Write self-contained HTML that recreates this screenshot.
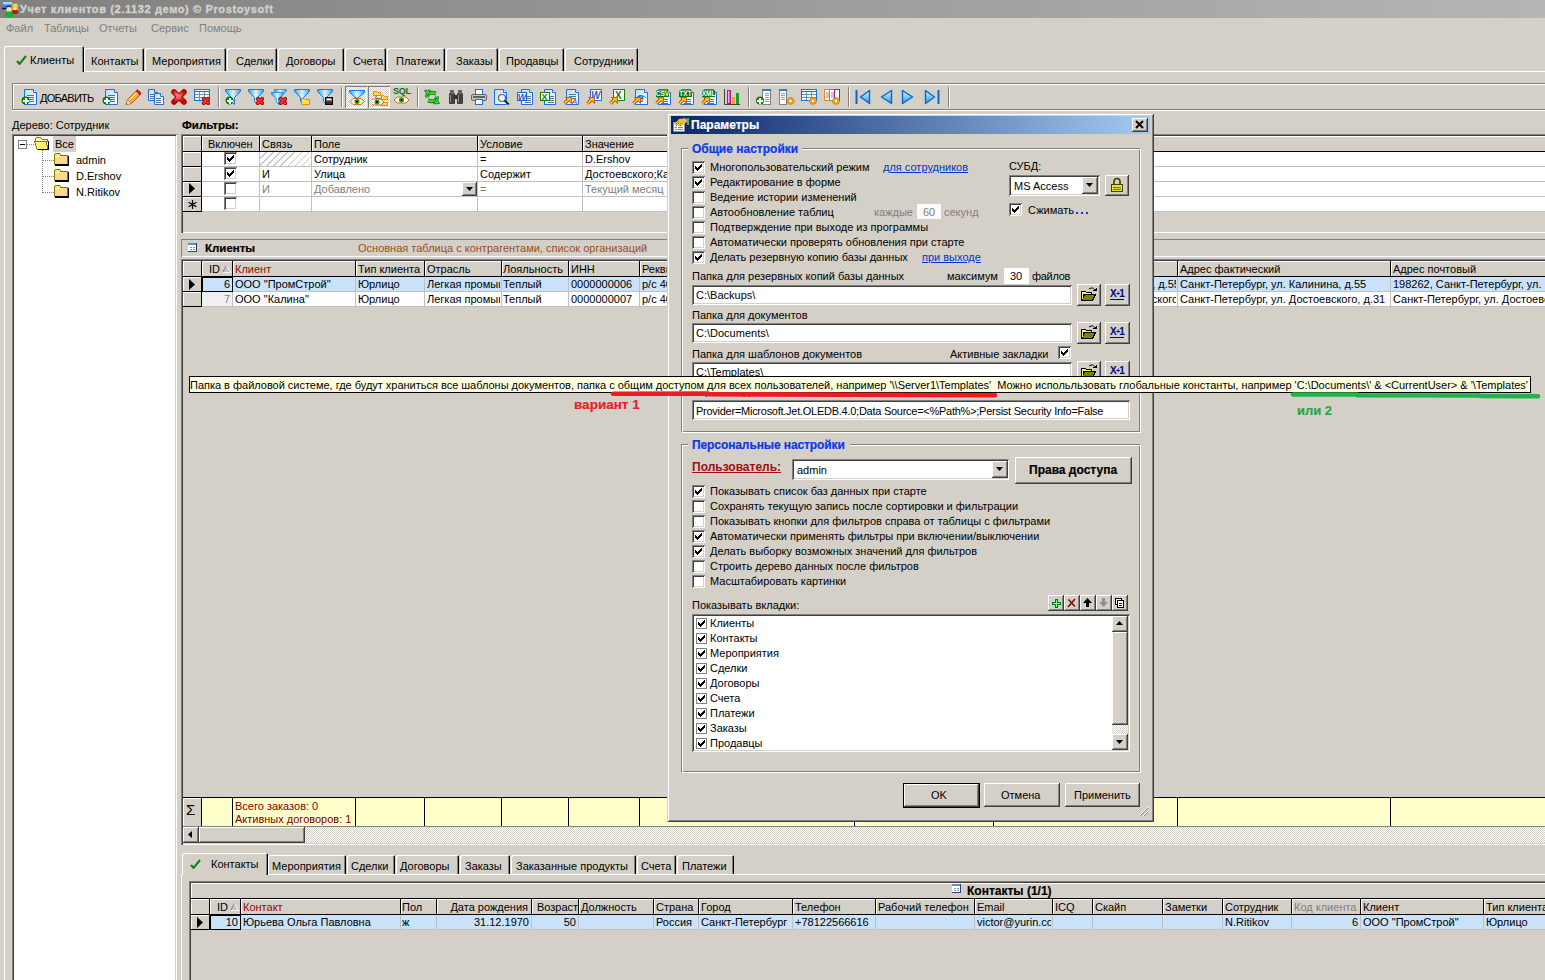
<!DOCTYPE html><html><head><meta charset="utf-8"><style>
html,body{margin:0;padding:0;width:1545px;height:980px;overflow:hidden;background:#d4d0c8;position:relative}
.a{position:absolute}
.t{position:absolute;font:11px/13px "Liberation Sans",sans-serif;white-space:pre}
svg{shape-rendering:crispEdges}
.sm{shape-rendering:auto}
</style></head><body>
<div class="a" style="left:0px;top:0px;width:1545px;height:18px;background:linear-gradient(90deg,#808080,#b5b5b5);"></div>
<div class="t" style="left:20px;top:3px;color:#d4d0c8;font-weight:bold;-webkit-text-stroke:0.2px #d4d0c8;letter-spacing:0.62px;-webkit-text-stroke:0.35px #d4d0c8">Учет клиентов (2.1132 демо) © Prostoysoft</div>
<svg class="a sm" style="left:0;top:0" width="20" height="18" viewBox="0 0 20 18"><rect x="2.5" y="1.5" width="9.5" height="7" fill="#3a7ee8"/><rect x="3" y="2" width="9" height="2.5" fill="#a8d0f8"/><path d="M2 8.5h5" stroke="#101010" stroke-width="1.4"/><rect x="12" y="3.5" width="6" height="7" rx="1" fill="#f0b020"/><rect x="13.5" y="4" width="3.5" height="3" fill="#e8e040"/><rect x="12" y="10" width="6" height="4" rx="1.5" fill="#d00c0c"/><circle cx="15" cy="8.8" r="1.4" fill="#fff"/><path d="M6 7c1-2 4-2 5 0" fill="#303030"/><circle cx="9" cy="9.5" r="2.6" fill="#f8d8c0"/><path d="M5 17v-3c0-2 1.5-2.5 4-2.5s4 0.5 4 2.5v3z" fill="#18b028"/></svg>
<div class="t" style="left:6px;top:22px;color:#808080;">Файл</div>
<div class="t" style="left:44px;top:22px;color:#808080;">Таблицы</div>
<div class="t" style="left:99px;top:22px;color:#808080;">Отчеты</div>
<div class="t" style="left:151px;top:22px;color:#808080;">Сервис</div>
<div class="t" style="left:199px;top:22px;color:#808080;">Помощь</div>
<div class="a" style="left:83px;top:71px;width:1462px;height:1px;background:#fff;"></div>
<div class="a" style="left:4px;top:71px;width:1px;height:909px;background:#fff;"></div>
<div class="a" style="left:84px;top:48px;width:60px;height:23px;background:#d4d0c8;box-shadow: inset 1px 1px 0 #fff, inset -1px 0 0 #000, inset -2px 0 0 #808080;border-radius:2px 2px 0 0"></div>
<div class="t" style="left:91px;top:55px;color:#000;">Контакты</div>
<div class="a" style="left:145px;top:48px;width:81px;height:23px;background:#d4d0c8;box-shadow: inset 1px 1px 0 #fff, inset -1px 0 0 #000, inset -2px 0 0 #808080;border-radius:2px 2px 0 0"></div>
<div class="t" style="left:152px;top:55px;color:#000;">Мероприятия</div>
<div class="a" style="left:227px;top:48px;width:50px;height:23px;background:#d4d0c8;box-shadow: inset 1px 1px 0 #fff, inset -1px 0 0 #000, inset -2px 0 0 #808080;border-radius:2px 2px 0 0"></div>
<div class="t" style="left:236px;top:55px;color:#000;">Сделки</div>
<div class="a" style="left:278px;top:48px;width:66px;height:23px;background:#d4d0c8;box-shadow: inset 1px 1px 0 #fff, inset -1px 0 0 #000, inset -2px 0 0 #808080;border-radius:2px 2px 0 0"></div>
<div class="t" style="left:286px;top:55px;color:#000;">Договоры</div>
<div class="a" style="left:345px;top:48px;width:41px;height:23px;background:#d4d0c8;box-shadow: inset 1px 1px 0 #fff, inset -1px 0 0 #000, inset -2px 0 0 #808080;border-radius:2px 2px 0 0"></div>
<div class="t" style="left:353px;top:55px;color:#000;">Счета</div>
<div class="a" style="left:387px;top:48px;width:58px;height:23px;background:#d4d0c8;box-shadow: inset 1px 1px 0 #fff, inset -1px 0 0 #000, inset -2px 0 0 #808080;border-radius:2px 2px 0 0"></div>
<div class="t" style="left:396px;top:55px;color:#000;">Платежи</div>
<div class="a" style="left:446px;top:48px;width:52px;height:23px;background:#d4d0c8;box-shadow: inset 1px 1px 0 #fff, inset -1px 0 0 #000, inset -2px 0 0 #808080;border-radius:2px 2px 0 0"></div>
<div class="t" style="left:456px;top:55px;color:#000;">Заказы</div>
<div class="a" style="left:499px;top:48px;width:65px;height:23px;background:#d4d0c8;box-shadow: inset 1px 1px 0 #fff, inset -1px 0 0 #000, inset -2px 0 0 #808080;border-radius:2px 2px 0 0"></div>
<div class="t" style="left:506px;top:55px;color:#000;">Продавцы</div>
<div class="a" style="left:565px;top:48px;width:73px;height:23px;background:#d4d0c8;box-shadow: inset 1px 1px 0 #fff, inset -1px 0 0 #000, inset -2px 0 0 #808080;border-radius:2px 2px 0 0"></div>
<div class="t" style="left:574px;top:55px;color:#000;">Сотрудники</div>
<div class="a" style="left:4px;top:46px;width:80px;height:26px;background:#d4d0c8;box-shadow: inset 1px 1px 0 #fff, inset -1px 0 0 #000, inset -2px 0 0 #808080;border-radius:2px 2px 0 0"></div>
<svg class="a" style="left:16px;top:55px" width="11" height="10" viewBox="0 0 11 10"><path class="sm" d="M1 6 L3.5 9 L10 1" fill="none" stroke="#108010" stroke-width="2"/></svg>
<div class="t" style="left:30px;top:54px;color:#000;">Клиенты</div>
<div class="a" style="left:12px;top:83px;width:1533px;height:28px;background:transparent;box-sizing:border-box;border-top:1px solid #808080;border-left:1px solid #808080;box-shadow: inset 1px 1px 0 #fff;"></div>
<div class="a" style="left:12px;top:109px;width:1533px;height:1px;background:#808080;"></div>
<div class="a" style="left:12px;top:110px;width:1533px;height:1px;background:#fff;"></div>
<div class="t" style="left:40px;top:92px;color:#000;letter-spacing:-0.75px">ДОБАВИТЬ</div>
<div class="a" style="left:218px;top:87px;width:1px;height:20px;background:#808080;"></div>
<div class="a" style="left:219px;top:87px;width:1px;height:20px;background:#fff;"></div>
<div class="a" style="left:341px;top:87px;width:1px;height:20px;background:#808080;"></div>
<div class="a" style="left:342px;top:87px;width:1px;height:20px;background:#fff;"></div>
<div class="a" style="left:417px;top:87px;width:1px;height:20px;background:#808080;"></div>
<div class="a" style="left:418px;top:87px;width:1px;height:20px;background:#fff;"></div>
<div class="a" style="left:748px;top:87px;width:1px;height:20px;background:#808080;"></div>
<div class="a" style="left:749px;top:87px;width:1px;height:20px;background:#fff;"></div>
<div class="a" style="left:848px;top:87px;width:1px;height:20px;background:#808080;"></div>
<div class="a" style="left:849px;top:87px;width:1px;height:20px;background:#fff;"></div>
<div class="a" style="left:948px;top:87px;width:1px;height:20px;background:#808080;"></div>
<div class="a" style="left:949px;top:87px;width:1px;height:20px;background:#fff;"></div>
<div class="a" style="left:345px;top:86px;width:22px;height:22px;background:repeating-conic-gradient(#fff 0 25%, #d4d0c8 0 50%) 0 0/2px 2px;box-shadow: inset 1px 1px 0 #808080, inset -1px -1px 0 #fff;"></div>
<div class="a" style="left:368px;top:86px;width:22px;height:22px;background:repeating-conic-gradient(#fff 0 25%, #d4d0c8 0 50%) 0 0/2px 2px;box-shadow: inset 1px 1px 0 #808080, inset -1px -1px 0 #fff;"></div>
<div class="t" style="left:12px;top:119px;color:#000;">Дерево: Сотрудник</div>
<div class="a" style="left:12px;top:134px;width:165px;height:856px;background:#fff;box-shadow: inset 1px 1px 0 #808080, inset -1px -1px 0 #fff, inset 2px 2px 0 #404040, inset -2px -2px 0 #d4d0c8;"></div>
<div class="a" style="left:18px;top:140px;width:9px;height:9px;background:#fff;box-sizing:border-box;border:1px solid #808080"></div>
<div class="a" style="left:20px;top:144px;width:5px;height:1px;background:#000;"></div>
<div class="a" style="left:27px;top:144px;width:7px;height:1px;background:repeating-linear-gradient(90deg,#808080 0 1px,transparent 1px 2px)"></div>
<div class="a" style="left:42px;top:150px;width:1px;height:43px;background:repeating-linear-gradient(180deg,#808080 0 1px,transparent 1px 2px)"></div>
<div class="a" style="left:43px;top:160px;width:11px;height:1px;background:repeating-linear-gradient(90deg,#808080 0 1px,transparent 1px 2px)"></div>
<div class="a" style="left:43px;top:176px;width:11px;height:1px;background:repeating-linear-gradient(90deg,#808080 0 1px,transparent 1px 2px)"></div>
<div class="a" style="left:43px;top:192px;width:11px;height:1px;background:repeating-linear-gradient(90deg,#808080 0 1px,transparent 1px 2px)"></div>
<div class="a" style="left:53px;top:136px;width:23px;height:16px;background:#d4d0c8;"></div>
<div class="t" style="left:55px;top:138px;color:#000;">Все</div>
<div class="t" style="left:76px;top:154px;color:#000;">admin</div>
<svg class="a" style="left:54px;top:153px" width="16" height="14" viewBox="0 0 16 14"><path d="M0.5 12V1.5L1.5 0.5h4l1.5 2h6.5v9h-13z" fill="#ffd890" stroke="#808000"/><path d="M1 11.5h12.5M14.5 2.5v10M1 12.5h14" stroke="#000" fill="none"/><path d="M1.5 3.5h5" stroke="#ffff80"/></svg>
<div class="t" style="left:76px;top:170px;color:#000;">D.Ershov</div>
<svg class="a" style="left:54px;top:169px" width="16" height="14" viewBox="0 0 16 14"><path d="M0.5 12V1.5L1.5 0.5h4l1.5 2h6.5v9h-13z" fill="#ffd890" stroke="#808000"/><path d="M1 11.5h12.5M14.5 2.5v10M1 12.5h14" stroke="#000" fill="none"/><path d="M1.5 3.5h5" stroke="#ffff80"/></svg>
<div class="t" style="left:76px;top:186px;color:#000;">N.Ritikov</div>
<svg class="a" style="left:54px;top:185px" width="16" height="14" viewBox="0 0 16 14"><path d="M0.5 12V1.5L1.5 0.5h4l1.5 2h6.5v9h-13z" fill="#ffd890" stroke="#808000"/><path d="M1 11.5h12.5M14.5 2.5v10M1 12.5h14" stroke="#000" fill="none"/><path d="M1.5 3.5h5" stroke="#ffff80"/></svg>
<svg class="a" style="left:34px;top:137px" width="16" height="14" viewBox="0 0 16 14"><path d="M1.5 4V1.5L2.5 0.5h4l1.5 1.5h5.5v3" fill="#ffff90" stroke="#808000"/><path d="M0.5 4.5h11.5l2 7.5h-11z" fill="#fff070" stroke="#808000"/><path d="M1.5 5.5h9" stroke="#ffffc0"/><path d="M14.5 4v8.5h-11" stroke="#000" fill="none"/></svg>
<div class="t" style="left:182px;top:119px;color:#000;font-weight:bold;-webkit-text-stroke:0.2px #000;font-size:11.5px;">Фильтры:</div>
<div class="a" style="left:181px;top:134px;width:1367px;height:99px;background:#d4d0c8;box-shadow: inset 1px 1px 0 #808080, inset 2px 2px 0 #404040, inset -1px -1px 0 #fff;"></div>
<div class="a" style="left:183px;top:136px;width:18px;height:15px;background:#d4d0c8;box-shadow: inset 1px 1px 0 #fff;"></div>
<div class="a" style="left:201px;top:136px;width:1px;height:16px;background:#000;"></div>
<div class="a" style="left:183px;top:151px;width:19px;height:1px;background:#000;"></div>
<div class="a" style="left:202px;top:136px;width:57px;height:15px;background:#d4d0c8;box-shadow: inset 1px 1px 0 #fff;"></div>
<div class="a" style="left:259px;top:136px;width:1px;height:16px;background:#000;"></div>
<div class="a" style="left:202px;top:151px;width:58px;height:1px;background:#000;"></div>
<div class="a" style="left:260px;top:136px;width:51px;height:15px;background:#d4d0c8;box-shadow: inset 1px 1px 0 #fff;"></div>
<div class="a" style="left:311px;top:136px;width:1px;height:16px;background:#000;"></div>
<div class="a" style="left:260px;top:151px;width:52px;height:1px;background:#000;"></div>
<div class="a" style="left:312px;top:136px;width:165px;height:15px;background:#d4d0c8;box-shadow: inset 1px 1px 0 #fff;"></div>
<div class="a" style="left:477px;top:136px;width:1px;height:16px;background:#000;"></div>
<div class="a" style="left:312px;top:151px;width:166px;height:1px;background:#000;"></div>
<div class="a" style="left:478px;top:136px;width:104px;height:15px;background:#d4d0c8;box-shadow: inset 1px 1px 0 #fff;"></div>
<div class="a" style="left:582px;top:136px;width:1px;height:16px;background:#000;"></div>
<div class="a" style="left:478px;top:151px;width:105px;height:1px;background:#000;"></div>
<div class="a" style="left:583px;top:136px;width:962px;height:15px;background:#d4d0c8;box-shadow: inset 1px 1px 0 #fff;"></div>
<div class="a" style="left:1545px;top:136px;width:1px;height:16px;background:#000;"></div>
<div class="a" style="left:583px;top:151px;width:963px;height:1px;background:#000;"></div>
<div class="t" style="left:208px;top:138px;color:#000;">Включен</div>
<div class="t" style="left:262px;top:138px;color:#000;">Связь</div>
<div class="t" style="left:314px;top:138px;color:#000;">Поле</div>
<div class="t" style="left:480px;top:138px;color:#000;">Условие</div>
<div class="t" style="left:585px;top:138px;color:#000;">Значение</div>
<div class="a" style="left:202px;top:152px;width:1343px;height:59px;background:#fff;"></div>
<div class="a" style="left:202px;top:166px;width:1343px;height:1px;background:#c0c0c0;"></div>
<div class="a" style="left:202px;top:181px;width:1343px;height:1px;background:#c0c0c0;"></div>
<div class="a" style="left:202px;top:196px;width:1343px;height:1px;background:#c0c0c0;"></div>
<div class="a" style="left:202px;top:211px;width:1343px;height:1px;background:#c0c0c0;"></div>
<div class="a" style="left:259px;top:152px;width:1px;height:60px;background:#c0c0c0;"></div>
<div class="a" style="left:311px;top:152px;width:1px;height:60px;background:#c0c0c0;"></div>
<div class="a" style="left:477px;top:152px;width:1px;height:60px;background:#c0c0c0;"></div>
<div class="a" style="left:582px;top:152px;width:1px;height:60px;background:#c0c0c0;"></div>
<div class="a" style="left:183px;top:152px;width:18px;height:14px;background:#d4d0c8;box-shadow: inset 1px 1px 0 #fff;"></div>
<div class="a" style="left:201px;top:152px;width:1px;height:15px;background:#000;"></div>
<div class="a" style="left:183px;top:166px;width:19px;height:1px;background:#000;"></div>
<div class="a" style="left:183px;top:167px;width:18px;height:14px;background:#d4d0c8;box-shadow: inset 1px 1px 0 #fff;"></div>
<div class="a" style="left:201px;top:167px;width:1px;height:15px;background:#000;"></div>
<div class="a" style="left:183px;top:181px;width:19px;height:1px;background:#000;"></div>
<div class="a" style="left:183px;top:182px;width:18px;height:14px;background:#d4d0c8;box-shadow: inset 1px 1px 0 #fff;"></div>
<div class="a" style="left:201px;top:182px;width:1px;height:15px;background:#000;"></div>
<div class="a" style="left:183px;top:196px;width:19px;height:1px;background:#000;"></div>
<div class="a" style="left:183px;top:197px;width:18px;height:14px;background:#d4d0c8;box-shadow: inset 1px 1px 0 #fff;"></div>
<div class="a" style="left:201px;top:197px;width:1px;height:15px;background:#000;"></div>
<div class="a" style="left:183px;top:211px;width:19px;height:1px;background:#000;"></div>
<svg class="a" style="left:189px;top:183px" width="6" height="11" viewBox="0 0 6 11"><path class="sm" d="M0 0L6 5.5L0 11z" fill="#000"/></svg>
<svg class="a" style="left:188px;top:200px" width="9" height="9" viewBox="0 0 9 9"><path class="sm" d="M4.5 0v9M0.6 2.2l7.8 4.6M0.6 6.8l7.8-4.6" stroke="#000" stroke-width="1.2"/></svg>
<div class="a" style="left:260px;top:152px;width:51px;height:14px;background:repeating-linear-gradient(135deg,#fff 0 4px,#c8c8c8 4px 5px)"></div>
<div class="a" style="left:224px;top:152px;width:13px;height:13px;background:#fff;box-shadow: inset 1px 1px 0 #808080, inset -1px -1px 0 #fff, inset 2px 2px 0 #404040, inset -2px -2px 0 #d4d0c8;"></div>
<svg class="a" style="left:227px;top:155px" width="7" height="7"><path d="M6 0h1v1h-1zM5 1h2v1h-2zM0 2h1v1h-1zM4 2h3v1h-3zM0 3h2v1h-2zM3 3h3v1h-3zM0 4h5v1h-5zM1 5h3v1h-3zM2 6h1v1h-1z" fill="#000"/></svg>
<div class="a" style="left:224px;top:167px;width:13px;height:13px;background:#fff;box-shadow: inset 1px 1px 0 #808080, inset -1px -1px 0 #fff, inset 2px 2px 0 #404040, inset -2px -2px 0 #d4d0c8;"></div>
<svg class="a" style="left:227px;top:170px" width="7" height="7"><path d="M6 0h1v1h-1zM5 1h2v1h-2zM0 2h1v1h-1zM4 2h3v1h-3zM0 3h2v1h-2zM3 3h3v1h-3zM0 4h5v1h-5zM1 5h3v1h-3zM2 6h1v1h-1z" fill="#000"/></svg>
<div class="a" style="left:224px;top:182px;width:13px;height:13px;background:#fff;box-shadow: inset 1px 1px 0 #808080, inset -1px -1px 0 #fff, inset 2px 2px 0 #404040, inset -2px -2px 0 #d4d0c8;"></div>
<div class="a" style="left:224px;top:197px;width:13px;height:13px;background:#fff;box-shadow: inset 1px 1px 0 #808080, inset -1px -1px 0 #fff, inset 2px 2px 0 #404040, inset -2px -2px 0 #d4d0c8;"></div>
<div class="t" style="left:314px;top:153px;color:#000;">Сотрудник</div>
<div class="t" style="left:480px;top:153px;color:#000;">=</div>
<div class="t" style="left:585px;top:153px;color:#000;">D.Ershov</div>
<div class="t" style="left:262px;top:168px;color:#000;">И</div>
<div class="t" style="left:314px;top:168px;color:#000;">Улица</div>
<div class="t" style="left:480px;top:168px;color:#000;">Содержит</div>
<div class="t" style="left:585px;top:168px;color:#000;">Достоевского;Калинина</div>
<div class="t" style="left:262px;top:183px;color:#808080;">И</div>
<div class="t" style="left:314px;top:183px;color:#808080;">Добавлено</div>
<div class="t" style="left:480px;top:183px;color:#808080;">=</div>
<div class="t" style="left:585px;top:183px;color:#808080;">Текущий месяц</div>
<div class="a" style="left:462px;top:182px;width:15px;height:14px;background:#d4d0c8;box-shadow: inset -1px -1px 0 #404040, inset 1px 1px 0 #fff, inset -2px -2px 0 #808080;"></div>
<svg class="a" style="left:466px;top:187px" width="7" height="4" viewBox="0 0 7 4"><path d="M0 0h7L3.5 4z" fill="#000" class="sm"/></svg>
<div class="a" style="left:181px;top:239px;width:1367px;height:18px;background:#d4d0c8;box-shadow: inset 1px 1px 0 #808080, inset -1px -1px 0 #fff;"></div>
<svg class="a" style="left:188px;top:243px" width="9" height="9" viewBox="0 0 9 9"><rect x="0" y="0" width="9" height="9" fill="#304070"/><rect x="0" y="0" width="8" height="8" fill="#fff"/><rect x="0" y="0" width="8" height="2" fill="#5a88e8"/><path d="M2 4.5h2M5 4.5h2M2 6.5h2M5 6.5h2" stroke="#8090b0"/></svg>
<div class="t" style="left:205px;top:242px;color:#000;font-weight:bold;-webkit-text-stroke:0.2px #000;font-size:11.5px;">Клиенты</div>
<div class="t" style="left:358px;top:242px;color:#94501a;">Основная таблица с контрагентами, список организаций</div>
<div class="a" style="left:181px;top:259px;width:1367px;height:586px;background:#d4d0c8;box-shadow: inset 1px 1px 0 #808080, inset 2px 2px 0 #404040, inset -1px -1px 0 #fff;"></div>
<div class="a" style="left:183px;top:261px;width:18px;height:15px;background:#d4d0c8;box-shadow: inset 1px 1px 0 #fff;"></div>
<div class="a" style="left:201px;top:261px;width:1px;height:16px;background:#000;"></div>
<div class="a" style="left:183px;top:276px;width:19px;height:1px;background:#000;"></div>
<div class="a" style="left:202px;top:261px;width:30px;height:15px;background:#d4d0c8;box-shadow: inset 1px 1px 0 #fff;"></div>
<div class="a" style="left:232px;top:261px;width:1px;height:16px;background:#000;"></div>
<div class="a" style="left:202px;top:276px;width:31px;height:1px;background:#000;"></div>
<div class="a" style="left:233px;top:261px;width:122px;height:15px;background:#d4d0c8;box-shadow: inset 1px 1px 0 #fff;"></div>
<div class="a" style="left:355px;top:261px;width:1px;height:16px;background:#000;"></div>
<div class="a" style="left:233px;top:276px;width:123px;height:1px;background:#000;"></div>
<div class="a" style="left:356px;top:261px;width:68px;height:15px;background:#d4d0c8;box-shadow: inset 1px 1px 0 #fff;"></div>
<div class="a" style="left:424px;top:261px;width:1px;height:16px;background:#000;"></div>
<div class="a" style="left:356px;top:276px;width:69px;height:1px;background:#000;"></div>
<div class="a" style="left:425px;top:261px;width:76px;height:15px;background:#d4d0c8;box-shadow: inset 1px 1px 0 #fff;"></div>
<div class="a" style="left:501px;top:261px;width:1px;height:16px;background:#000;"></div>
<div class="a" style="left:425px;top:276px;width:77px;height:1px;background:#000;"></div>
<div class="a" style="left:502px;top:261px;width:66px;height:15px;background:#d4d0c8;box-shadow: inset 1px 1px 0 #fff;"></div>
<div class="a" style="left:568px;top:261px;width:1px;height:16px;background:#000;"></div>
<div class="a" style="left:502px;top:276px;width:67px;height:1px;background:#000;"></div>
<div class="a" style="left:569px;top:261px;width:70px;height:15px;background:#d4d0c8;box-shadow: inset 1px 1px 0 #fff;"></div>
<div class="a" style="left:639px;top:261px;width:1px;height:16px;background:#000;"></div>
<div class="a" style="left:569px;top:276px;width:71px;height:1px;background:#000;"></div>
<div class="a" style="left:640px;top:261px;width:537px;height:15px;background:#d4d0c8;box-shadow: inset 1px 1px 0 #fff;"></div>
<div class="a" style="left:1177px;top:261px;width:1px;height:16px;background:#000;"></div>
<div class="a" style="left:640px;top:276px;width:538px;height:1px;background:#000;"></div>
<div class="a" style="left:1178px;top:261px;width:212px;height:15px;background:#d4d0c8;box-shadow: inset 1px 1px 0 #fff;"></div>
<div class="a" style="left:1390px;top:261px;width:1px;height:16px;background:#000;"></div>
<div class="a" style="left:1178px;top:276px;width:213px;height:1px;background:#000;"></div>
<div class="a" style="left:1391px;top:261px;width:154px;height:15px;background:#d4d0c8;box-shadow: inset 1px 1px 0 #fff;"></div>
<div class="a" style="left:1545px;top:261px;width:1px;height:16px;background:#000;"></div>
<div class="a" style="left:1391px;top:276px;width:155px;height:1px;background:#000;"></div>
<div class="t" style="left:209px;top:263px;color:#000;">ID</div>
<svg class="a" style="left:222px;top:265px" width="9" height="8" viewBox="0 0 9 8"><path class="sm" d="M4.5 0.5L8.5 7.5H0.5z" fill="#c4c4c4"/><path class="sm" d="M4.5 0.5L0.5 7.5" stroke="#808080" fill="none"/><path class="sm" d="M4.5 0.5L8.5 7.5H0.5" stroke="#fff" fill="none" stroke-width="0.8"/></svg>
<div class="t" style="left:235px;top:263px;color:#940808;">Клиент</div>
<div class="t" style="left:358px;top:263px;color:#000;">Тип клиента</div>
<div class="t" style="left:427px;top:263px;color:#000;">Отрасль</div>
<div class="t" style="left:503px;top:263px;color:#000;">Лояльность</div>
<div class="t" style="left:571px;top:263px;color:#000;">ИНН</div>
<div class="t" style="left:642px;top:263px;color:#000;">Реквизиты</div>
<div class="t" style="left:1180px;top:263px;color:#000;">Адрес фактический</div>
<div class="t" style="left:1393px;top:263px;color:#000;">Адрес почтовый</div>
<div class="a" style="left:202px;top:277px;width:1343px;height:14px;background:#cae2fa;"></div>
<div class="a" style="left:202px;top:292px;width:1343px;height:14px;background:#fff;"></div>
<div class="a" style="left:202px;top:292px;width:30px;height:14px;background:#f0f0f0;"></div>
<div class="a" style="left:202px;top:291px;width:1343px;height:1px;background:#c0c0c0;"></div>
<div class="a" style="left:202px;top:306px;width:1343px;height:1px;background:#c0c0c0;"></div>
<div class="a" style="left:232px;top:277px;width:1px;height:30px;background:#c0c0c0;"></div>
<div class="a" style="left:355px;top:277px;width:1px;height:30px;background:#c0c0c0;"></div>
<div class="a" style="left:424px;top:277px;width:1px;height:30px;background:#c0c0c0;"></div>
<div class="a" style="left:501px;top:277px;width:1px;height:30px;background:#c0c0c0;"></div>
<div class="a" style="left:568px;top:277px;width:1px;height:30px;background:#c0c0c0;"></div>
<div class="a" style="left:639px;top:277px;width:1px;height:30px;background:#c0c0c0;"></div>
<div class="a" style="left:1177px;top:277px;width:1px;height:30px;background:#c0c0c0;"></div>
<div class="a" style="left:1390px;top:277px;width:1px;height:30px;background:#c0c0c0;"></div>
<div class="a" style="left:183px;top:277px;width:18px;height:14px;background:#d4d0c8;box-shadow: inset 1px 1px 0 #fff;"></div>
<div class="a" style="left:201px;top:277px;width:1px;height:15px;background:#000;"></div>
<div class="a" style="left:183px;top:291px;width:19px;height:1px;background:#000;"></div>
<div class="a" style="left:183px;top:292px;width:18px;height:14px;background:#d4d0c8;box-shadow: inset 1px 1px 0 #fff;"></div>
<div class="a" style="left:201px;top:292px;width:1px;height:15px;background:#000;"></div>
<div class="a" style="left:183px;top:306px;width:19px;height:1px;background:#000;"></div>
<svg class="a" style="left:189px;top:279px" width="6" height="11" viewBox="0 0 6 11"><path class="sm" d="M0 0L6 5.5L0 11z" fill="#000"/></svg>
<div class="a" style="left:202px;top:277px;width:31px;height:15px;background:transparent;box-sizing:border-box;border:1px solid #000"></div>
<div class="t" style="right:1315px;top:278px;color:#000">6</div>
<div class="t" style="right:1315px;top:293px;color:#808080">7</div>
<div class="t" style="left:235px;top:278px;color:#000;">ООО "ПромСтрой"</div>
<div class="t" style="left:235px;top:293px;color:#000;">ООО "Калина"</div>
<div class="t" style="left:358px;top:278px;width:65px;overflow:hidden;color:#000">Юрлицо</div>
<div class="t" style="left:427px;top:278px;width:73px;overflow:hidden;color:#000">Легкая промышленность</div>
<div class="t" style="left:503px;top:278px;width:64px;overflow:hidden;color:#000">Теплый</div>
<div class="t" style="left:642px;top:278px;width:40px;overflow:hidden;color:#000">р/с 40702810000000000000</div>
<div class="t" style="left:358px;top:293px;width:65px;overflow:hidden;color:#000">Юрлицо</div>
<div class="t" style="left:427px;top:293px;width:73px;overflow:hidden;color:#000">Легкая промышленность</div>
<div class="t" style="left:503px;top:293px;width:64px;overflow:hidden;color:#000">Теплый</div>
<div class="t" style="left:642px;top:293px;width:40px;overflow:hidden;color:#000">р/с 40702810000000000000</div>
<div class="t" style="left:571px;top:278px;color:#000;">0000000006</div>
<div class="t" style="left:571px;top:293px;color:#000;">0000000007</div>
<div class="a" style="left:1100px;width:76px;top:277px;height:14px;overflow:hidden"><div class="t" style="right:-4px;top:1px">ул. Калинина, д.55</div></div>
<div class="a" style="left:1100px;width:76px;top:292px;height:14px;overflow:hidden"><div class="t" style="right:-30px;top:1px">ул. Достоевского, д.31</div></div>
<div class="t" style="left:1180px;top:278px;width:209px;overflow:hidden;color:#000">Санкт-Петербург, ул. Калинина, д.55</div>
<div class="t" style="left:1180px;top:293px;width:209px;overflow:hidden;color:#000">Санкт-Петербург, ул. Достоевского, д.31</div>
<div class="t" style="left:1393px;top:278px;width:152px;overflow:hidden;color:#000">198262, Санкт-Петербург, ул. Калинина, д.55</div>
<div class="t" style="left:1393px;top:293px;width:152px;overflow:hidden;color:#000">Санкт-Петербург, ул. Достоевского, д.31</div>
<div class="a" style="left:183px;top:797px;width:1362px;height:1px;background:#000;"></div>
<div class="a" style="left:183px;top:798px;width:18px;height:29px;background:#d4d0c8;box-shadow: inset 1px 1px 0 #fff;"></div>
<div class="a" style="left:201px;top:798px;width:1px;height:29px;background:#000;"></div>
<div class="a" style="left:202px;top:798px;width:1343px;height:28px;background:#ffffcc;"></div>
<div class="a" style="left:232px;top:798px;width:1px;height:28px;background:#000;"></div>
<div class="a" style="left:355px;top:798px;width:1px;height:28px;background:#000;"></div>
<div class="a" style="left:424px;top:798px;width:1px;height:28px;background:#000;"></div>
<div class="a" style="left:501px;top:798px;width:1px;height:28px;background:#000;"></div>
<div class="a" style="left:568px;top:798px;width:1px;height:28px;background:#000;"></div>
<div class="a" style="left:639px;top:798px;width:1px;height:28px;background:#000;"></div>
<div class="a" style="left:854px;top:798px;width:1px;height:28px;background:#000;"></div>
<div class="a" style="left:993px;top:798px;width:1px;height:28px;background:#000;"></div>
<div class="a" style="left:1177px;top:798px;width:1px;height:28px;background:#000;"></div>
<div class="a" style="left:1390px;top:798px;width:1px;height:28px;background:#000;"></div>
<div class="a" style="left:183px;top:826px;width:1362px;height:1px;background:#808080;"></div>
<div class="t" style="left:186px;top:803px;color:#000;font-size:15px;">Σ</div>
<div class="t" style="left:235px;top:800px;color:#800000;">Всего заказов: 0</div>
<div class="t" style="left:235px;top:813px;color:#800000;">Активных договоров: 1</div>
<div class="a" style="left:183px;top:827px;width:1362px;height:16px;background:repeating-conic-gradient(#fff 0 25%, #d4d0c8 0 50%) 0 0/2px 2px;"></div>
<div class="a" style="left:183px;top:827px;width:16px;height:16px;background:#d4d0c8;box-shadow: inset -1px -1px 0 #404040, inset 1px 1px 0 #fff, inset -2px -2px 0 #808080;"></div>
<svg class="a" style="left:188px;top:831px" width="4" height="7" viewBox="0 0 4 7"><path class="sm" d="M4 0v7L0 3.5z" fill="#000"/></svg>
<div class="a" style="left:199px;top:827px;width:106px;height:16px;background:#d4d0c8;box-shadow: inset -1px -1px 0 #404040, inset 1px 1px 0 #fff, inset -2px -2px 0 #808080;"></div>
<div class="a" style="left:267px;top:874px;width:1278px;height:1px;background:#fff;"></div>
<div class="a" style="left:268px;top:855px;width:78px;height:19px;background:#d4d0c8;box-shadow: inset 1px 1px 0 #fff, inset -1px 0 0 #000, inset -2px 0 0 #808080;border-radius:2px 2px 0 0"></div>
<div class="t" style="left:272px;top:860px;color:#000;">Мероприятия</div>
<div class="a" style="left:347px;top:855px;width:48px;height:19px;background:#d4d0c8;box-shadow: inset 1px 1px 0 #fff, inset -1px 0 0 #000, inset -2px 0 0 #808080;border-radius:2px 2px 0 0"></div>
<div class="t" style="left:351px;top:860px;color:#000;">Сделки</div>
<div class="a" style="left:396px;top:855px;width:63px;height:19px;background:#d4d0c8;box-shadow: inset 1px 1px 0 #fff, inset -1px 0 0 #000, inset -2px 0 0 #808080;border-radius:2px 2px 0 0"></div>
<div class="t" style="left:400px;top:860px;color:#000;">Договоры</div>
<div class="a" style="left:460px;top:855px;width:50px;height:19px;background:#d4d0c8;box-shadow: inset 1px 1px 0 #fff, inset -1px 0 0 #000, inset -2px 0 0 #808080;border-radius:2px 2px 0 0"></div>
<div class="t" style="left:465px;top:860px;color:#000;">Заказы</div>
<div class="a" style="left:511px;top:855px;width:125px;height:19px;background:#d4d0c8;box-shadow: inset 1px 1px 0 #fff, inset -1px 0 0 #000, inset -2px 0 0 #808080;border-radius:2px 2px 0 0"></div>
<div class="t" style="left:516px;top:860px;color:#000;">Заказанные продукты</div>
<div class="a" style="left:637px;top:855px;width:39px;height:19px;background:#d4d0c8;box-shadow: inset 1px 1px 0 #fff, inset -1px 0 0 #000, inset -2px 0 0 #808080;border-radius:2px 2px 0 0"></div>
<div class="t" style="left:641px;top:860px;color:#000;">Счета</div>
<div class="a" style="left:677px;top:855px;width:57px;height:19px;background:#d4d0c8;box-shadow: inset 1px 1px 0 #fff, inset -1px 0 0 #000, inset -2px 0 0 #808080;border-radius:2px 2px 0 0"></div>
<div class="t" style="left:682px;top:860px;color:#000;">Платежи</div>
<div class="a" style="left:181px;top:874px;width:1px;height:106px;background:#fff;"></div>
<div class="a" style="left:182px;top:853px;width:86px;height:22px;background:#d4d0c8;box-shadow: inset 1px 1px 0 #fff, inset -1px 0 0 #000, inset -2px 0 0 #808080;border-radius:2px 2px 0 0"></div>
<svg class="a" style="left:190px;top:859px" width="11" height="10" viewBox="0 0 11 10"><path class="sm" d="M1 6 L3.5 9 L10 1" fill="none" stroke="#108010" stroke-width="2"/></svg>
<div class="t" style="left:211px;top:858px;color:#000;">Контакты</div>
<div class="a" style="left:189px;top:881px;width:1359px;height:110px;background:#d4d0c8;box-shadow: inset 1px 1px 0 #808080, inset 2px 2px 0 #404040;"></div>
<div class="a" style="left:191px;top:883px;width:1354px;height:15px;background:#d4d0c8;box-shadow: inset 0 1px 0 #fff, inset 1px 0 0 #fff;"></div>
<div class="a" style="left:191px;top:898px;width:1354px;height:1px;background:#000;"></div>
<svg class="a" style="left:952px;top:884px" width="9" height="9" viewBox="0 0 9 9"><rect x="0" y="0" width="9" height="9" fill="#304070"/><rect x="0" y="0" width="8" height="8" fill="#fff"/><rect x="0" y="0" width="8" height="2" fill="#5a88e8"/><path d="M2 4.5h2M5 4.5h2M2 6.5h2M5 6.5h2" stroke="#8090b0"/></svg>
<div class="t" style="left:967px;top:885px;color:#000;font-weight:bold;-webkit-text-stroke:0.2px #000;font-size:12px;">Контакты (1/1)</div>
<div class="a" style="left:191px;top:899px;width:18px;height:15px;background:#d4d0c8;box-shadow: inset 1px 1px 0 #fff;"></div>
<div class="a" style="left:209px;top:899px;width:1px;height:16px;background:#000;"></div>
<div class="a" style="left:191px;top:914px;width:19px;height:1px;background:#000;"></div>
<div class="a" style="left:210px;top:899px;width:30px;height:15px;background:#d4d0c8;box-shadow: inset 1px 1px 0 #fff;"></div>
<div class="a" style="left:240px;top:899px;width:1px;height:16px;background:#000;"></div>
<div class="a" style="left:210px;top:914px;width:31px;height:1px;background:#000;"></div>
<div class="a" style="left:241px;top:899px;width:159px;height:15px;background:#d4d0c8;box-shadow: inset 1px 1px 0 #fff;"></div>
<div class="a" style="left:400px;top:899px;width:1px;height:16px;background:#000;"></div>
<div class="a" style="left:241px;top:914px;width:160px;height:1px;background:#000;"></div>
<div class="a" style="left:401px;top:899px;width:35px;height:15px;background:#d4d0c8;box-shadow: inset 1px 1px 0 #fff;"></div>
<div class="a" style="left:436px;top:899px;width:1px;height:16px;background:#000;"></div>
<div class="a" style="left:401px;top:914px;width:36px;height:1px;background:#000;"></div>
<div class="a" style="left:437px;top:899px;width:94px;height:15px;background:#d4d0c8;box-shadow: inset 1px 1px 0 #fff;"></div>
<div class="a" style="left:531px;top:899px;width:1px;height:16px;background:#000;"></div>
<div class="a" style="left:437px;top:914px;width:95px;height:1px;background:#000;"></div>
<div class="a" style="left:532px;top:899px;width:46px;height:15px;background:#d4d0c8;box-shadow: inset 1px 1px 0 #fff;"></div>
<div class="a" style="left:578px;top:899px;width:1px;height:16px;background:#000;"></div>
<div class="a" style="left:532px;top:914px;width:47px;height:1px;background:#000;"></div>
<div class="a" style="left:579px;top:899px;width:74px;height:15px;background:#d4d0c8;box-shadow: inset 1px 1px 0 #fff;"></div>
<div class="a" style="left:653px;top:899px;width:1px;height:16px;background:#000;"></div>
<div class="a" style="left:579px;top:914px;width:75px;height:1px;background:#000;"></div>
<div class="a" style="left:654px;top:899px;width:44px;height:15px;background:#d4d0c8;box-shadow: inset 1px 1px 0 #fff;"></div>
<div class="a" style="left:698px;top:899px;width:1px;height:16px;background:#000;"></div>
<div class="a" style="left:654px;top:914px;width:45px;height:1px;background:#000;"></div>
<div class="a" style="left:699px;top:899px;width:93px;height:15px;background:#d4d0c8;box-shadow: inset 1px 1px 0 #fff;"></div>
<div class="a" style="left:792px;top:899px;width:1px;height:16px;background:#000;"></div>
<div class="a" style="left:699px;top:914px;width:94px;height:1px;background:#000;"></div>
<div class="a" style="left:793px;top:899px;width:82px;height:15px;background:#d4d0c8;box-shadow: inset 1px 1px 0 #fff;"></div>
<div class="a" style="left:875px;top:899px;width:1px;height:16px;background:#000;"></div>
<div class="a" style="left:793px;top:914px;width:83px;height:1px;background:#000;"></div>
<div class="a" style="left:876px;top:899px;width:98px;height:15px;background:#d4d0c8;box-shadow: inset 1px 1px 0 #fff;"></div>
<div class="a" style="left:974px;top:899px;width:1px;height:16px;background:#000;"></div>
<div class="a" style="left:876px;top:914px;width:99px;height:1px;background:#000;"></div>
<div class="a" style="left:975px;top:899px;width:77px;height:15px;background:#d4d0c8;box-shadow: inset 1px 1px 0 #fff;"></div>
<div class="a" style="left:1052px;top:899px;width:1px;height:16px;background:#000;"></div>
<div class="a" style="left:975px;top:914px;width:78px;height:1px;background:#000;"></div>
<div class="a" style="left:1053px;top:899px;width:39px;height:15px;background:#d4d0c8;box-shadow: inset 1px 1px 0 #fff;"></div>
<div class="a" style="left:1092px;top:899px;width:1px;height:16px;background:#000;"></div>
<div class="a" style="left:1053px;top:914px;width:40px;height:1px;background:#000;"></div>
<div class="a" style="left:1093px;top:899px;width:69px;height:15px;background:#d4d0c8;box-shadow: inset 1px 1px 0 #fff;"></div>
<div class="a" style="left:1162px;top:899px;width:1px;height:16px;background:#000;"></div>
<div class="a" style="left:1093px;top:914px;width:70px;height:1px;background:#000;"></div>
<div class="a" style="left:1163px;top:899px;width:59px;height:15px;background:#d4d0c8;box-shadow: inset 1px 1px 0 #fff;"></div>
<div class="a" style="left:1222px;top:899px;width:1px;height:16px;background:#000;"></div>
<div class="a" style="left:1163px;top:914px;width:60px;height:1px;background:#000;"></div>
<div class="a" style="left:1223px;top:899px;width:68px;height:15px;background:#d4d0c8;box-shadow: inset 1px 1px 0 #fff;"></div>
<div class="a" style="left:1291px;top:899px;width:1px;height:16px;background:#000;"></div>
<div class="a" style="left:1223px;top:914px;width:69px;height:1px;background:#000;"></div>
<div class="a" style="left:1292px;top:899px;width:68px;height:15px;background:#d4d0c8;box-shadow: inset 1px 1px 0 #fff;"></div>
<div class="a" style="left:1360px;top:899px;width:1px;height:16px;background:#000;"></div>
<div class="a" style="left:1292px;top:914px;width:69px;height:1px;background:#000;"></div>
<div class="a" style="left:1361px;top:899px;width:122px;height:15px;background:#d4d0c8;box-shadow: inset 1px 1px 0 #fff;"></div>
<div class="a" style="left:1483px;top:899px;width:1px;height:16px;background:#000;"></div>
<div class="a" style="left:1361px;top:914px;width:123px;height:1px;background:#000;"></div>
<div class="a" style="left:1484px;top:899px;width:61px;height:15px;background:#d4d0c8;box-shadow: inset 1px 1px 0 #fff;"></div>
<div class="a" style="left:1545px;top:899px;width:1px;height:16px;background:#000;"></div>
<div class="a" style="left:1484px;top:914px;width:62px;height:1px;background:#000;"></div>
<div class="t" style="left:217px;top:901px;color:#000;">ID</div>
<svg class="a" style="left:230px;top:903px" width="9" height="8" viewBox="0 0 9 8"><path class="sm" d="M4.5 0.5L8.5 7.5H0.5z" fill="#c4c4c4"/><path class="sm" d="M4.5 0.5L0.5 7.5" stroke="#808080" fill="none"/><path class="sm" d="M4.5 0.5L8.5 7.5H0.5" stroke="#fff" fill="none" stroke-width="0.8"/></svg>
<div class="t" style="left:243px;top:901px;color:#940808;">Контакт</div>
<div class="t" style="left:402px;top:901px;color:#000;">Пол</div>
<div class="t" style="left:537px;top:901px;color:#000;">Возраст</div>
<div class="t" style="left:581px;top:901px;color:#000;">Должность</div>
<div class="t" style="left:656px;top:901px;color:#000;">Страна</div>
<div class="t" style="left:701px;top:901px;color:#000;">Город</div>
<div class="t" style="left:795px;top:901px;color:#000;">Телефон</div>
<div class="t" style="left:878px;top:901px;color:#000;">Рабочий телефон</div>
<div class="t" style="left:977px;top:901px;color:#000;">Email</div>
<div class="t" style="left:1055px;top:901px;color:#000;">ICQ</div>
<div class="t" style="left:1095px;top:901px;color:#000;">Скайп</div>
<div class="t" style="left:1165px;top:901px;color:#000;">Заметки</div>
<div class="t" style="left:1225px;top:901px;color:#000;">Сотрудник</div>
<div class="t" style="left:1363px;top:901px;color:#000;">Клиент</div>
<div class="t" style="left:1486px;top:901px;color:#000;">Тип клиента</div>
<div class="t" style="left:1294px;top:901px;color:#808080;">Код клиента</div>
<div class="t" style="right:1017px;top:901px;color:#000">Дата рождения</div>
<div class="a" style="left:210px;top:915px;width:1335px;height:14px;background:#cae2fa;"></div>
<div class="a" style="left:210px;top:929px;width:1335px;height:1px;background:#c0c0c0;"></div>
<div class="a" style="left:240px;top:915px;width:1px;height:15px;background:#c0c0c0;"></div>
<div class="a" style="left:400px;top:915px;width:1px;height:15px;background:#c0c0c0;"></div>
<div class="a" style="left:436px;top:915px;width:1px;height:15px;background:#c0c0c0;"></div>
<div class="a" style="left:531px;top:915px;width:1px;height:15px;background:#c0c0c0;"></div>
<div class="a" style="left:578px;top:915px;width:1px;height:15px;background:#c0c0c0;"></div>
<div class="a" style="left:653px;top:915px;width:1px;height:15px;background:#c0c0c0;"></div>
<div class="a" style="left:698px;top:915px;width:1px;height:15px;background:#c0c0c0;"></div>
<div class="a" style="left:792px;top:915px;width:1px;height:15px;background:#c0c0c0;"></div>
<div class="a" style="left:875px;top:915px;width:1px;height:15px;background:#c0c0c0;"></div>
<div class="a" style="left:974px;top:915px;width:1px;height:15px;background:#c0c0c0;"></div>
<div class="a" style="left:1052px;top:915px;width:1px;height:15px;background:#c0c0c0;"></div>
<div class="a" style="left:1092px;top:915px;width:1px;height:15px;background:#c0c0c0;"></div>
<div class="a" style="left:1162px;top:915px;width:1px;height:15px;background:#c0c0c0;"></div>
<div class="a" style="left:1222px;top:915px;width:1px;height:15px;background:#c0c0c0;"></div>
<div class="a" style="left:1291px;top:915px;width:1px;height:15px;background:#c0c0c0;"></div>
<div class="a" style="left:1360px;top:915px;width:1px;height:15px;background:#c0c0c0;"></div>
<div class="a" style="left:1483px;top:915px;width:1px;height:15px;background:#c0c0c0;"></div>
<div class="a" style="left:191px;top:915px;width:18px;height:14px;background:#d4d0c8;box-shadow: inset 1px 1px 0 #fff;"></div>
<div class="a" style="left:209px;top:915px;width:1px;height:15px;background:#000;"></div>
<div class="a" style="left:191px;top:929px;width:19px;height:1px;background:#000;"></div>
<svg class="a" style="left:197px;top:917px" width="6" height="11" viewBox="0 0 6 11"><path class="sm" d="M0 0L6 5.5L0 11z" fill="#000"/></svg>
<div class="a" style="left:210px;top:915px;width:31px;height:15px;background:transparent;box-sizing:border-box;border:1px solid #000"></div>
<div class="t" style="right:1307px;top:916px;color:#000">10</div>
<div class="t" style="left:243px;top:916px;color:#000;">Юрьева Ольга Павловна</div>
<div class="t" style="left:402px;top:916px;color:#000;">ж</div>
<div class="t" style="right:1016px;top:916px;color:#000">31.12.1970</div>
<div class="t" style="right:969px;top:916px;color:#000">50</div>
<div class="t" style="left:656px;top:916px;color:#000;">Россия</div>
<div class="t" style="left:701px;top:916px;color:#000;">Санкт-Петербург</div>
<div class="t" style="left:795px;top:916px;color:#000;">+78122566616</div>
<div class="t" style="left:977px;top:916px;width:74px;overflow:hidden;color:#000">victor@yurin.com</div>
<div class="t" style="left:1225px;top:916px;color:#000;">N.Ritikov</div>
<div class="t" style="right:187px;top:916px;color:#000">6</div>
<div class="t" style="left:1363px;top:916px;color:#000;">ООО "ПромСтрой"</div>
<div class="t" style="left:1486px;top:916px;color:#000;">Юрлицо</div>
<div class="a" style="left:667px;top:113px;width:487px;height:709px;background:#d4d0c8;box-shadow: inset 1px 1px 0 #d4d0c8, inset -1px -1px 0 #404040, inset 2px 2px 0 #fff, inset -2px -2px 0 #808080;"></div>
<div class="a" style="left:671px;top:116px;width:479px;height:18px;background:linear-gradient(90deg,#0a246a,#a6caf0);"></div>
<div class="t" style="left:691px;top:119px;color:#fff;font-weight:bold;-webkit-text-stroke:0.2px #fff;font-size:12px;">Параметры</div>
<svg class="a sm" style="left:672px;top:117px" width="18" height="16" viewBox="0 0 18 16"><rect x="1.5" y="5.5" width="11" height="9" fill="#f4f8ff" stroke="#8090a8" stroke-width="0.8"/><path d="M3 10.5h2M6 10.5h5M3 12.5h2M6 12.5h5" stroke="#7080a8"/><path d="M2 7.5L7 2L13 1.2Q15.5 2 15 4.5L12 7.5L9 9.5z" fill="#e8c040"/><path d="M4 6l1 1M6 4l1 1M6 6l1 1M8 6l1 1M8 8l1 1M4 8l1 1" stroke="#806020" stroke-width="0.9"/><rect x="15" y="1" width="2" height="7" fill="#60b040"/></svg>
<div class="a" style="left:1132px;top:118px;width:16px;height:14px;background:#d4d0c8;box-shadow: inset -1px -1px 0 #404040, inset 1px 1px 0 #fff, inset -2px -2px 0 #808080;"></div>
<svg class="a" style="left:1135px;top:120px" width="10" height="9" viewBox="0 0 10 9"><path d="M1 1L8 8M8 1L1 8" stroke="#000" stroke-width="2" class="sm"/></svg>
<div class="a" style="left:681px;top:148px;width:460px;height:285px;background:transparent;box-sizing:border-box;border:1px solid #808080;border-right-color:#fff;border-bottom-color:#fff;box-shadow: inset 1px 1px 0 #fff, inset -1px -1px 0 #808080;"></div>
<div class="a" style="left:688px;top:146px;width:114px;height:5px;background:#d4d0c8;"></div>
<div class="t" style="left:692px;top:143px;color:#0a3ae6;font-weight:bold;-webkit-text-stroke:0.2px #0a3ae6;font-size:12px;">Общие настройки</div>
<div class="a" style="left:681px;top:444px;width:460px;height:329px;background:transparent;box-sizing:border-box;border:1px solid #808080;border-right-color:#fff;border-bottom-color:#fff;box-shadow: inset 1px 1px 0 #fff, inset -1px -1px 0 #808080;"></div>
<div class="a" style="left:688px;top:442px;width:162px;height:5px;background:#d4d0c8;"></div>
<div class="t" style="left:692px;top:439px;color:#0a3ae6;font-weight:bold;-webkit-text-stroke:0.2px #0a3ae6;font-size:12px;letter-spacing:-0.1px">Персональные настройки</div>
<div class="a" style="left:692px;top:161px;width:13px;height:13px;background:#fff;box-shadow: inset 1px 1px 0 #808080, inset -1px -1px 0 #fff, inset 2px 2px 0 #404040, inset -2px -2px 0 #d4d0c8;"></div>
<svg class="a" style="left:695px;top:164px" width="7" height="7"><path d="M6 0h1v1h-1zM5 1h2v1h-2zM0 2h1v1h-1zM4 2h3v1h-3zM0 3h2v1h-2zM3 3h3v1h-3zM0 4h5v1h-5zM1 5h3v1h-3zM2 6h1v1h-1z" fill="#000"/></svg>
<div class="t" style="left:710px;top:161px;color:#000;">Многопользовательский режим</div>
<div class="a" style="left:692px;top:176px;width:13px;height:13px;background:#fff;box-shadow: inset 1px 1px 0 #808080, inset -1px -1px 0 #fff, inset 2px 2px 0 #404040, inset -2px -2px 0 #d4d0c8;"></div>
<svg class="a" style="left:695px;top:179px" width="7" height="7"><path d="M6 0h1v1h-1zM5 1h2v1h-2zM0 2h1v1h-1zM4 2h3v1h-3zM0 3h2v1h-2zM3 3h3v1h-3zM0 4h5v1h-5zM1 5h3v1h-3zM2 6h1v1h-1z" fill="#000"/></svg>
<div class="t" style="left:710px;top:176px;color:#000;">Редактирование в форме</div>
<div class="a" style="left:692px;top:191px;width:13px;height:13px;background:#fff;box-shadow: inset 1px 1px 0 #808080, inset -1px -1px 0 #fff, inset 2px 2px 0 #404040, inset -2px -2px 0 #d4d0c8;"></div>
<div class="t" style="left:710px;top:191px;color:#000;">Ведение истории изменений</div>
<div class="a" style="left:692px;top:206px;width:13px;height:13px;background:#fff;box-shadow: inset 1px 1px 0 #808080, inset -1px -1px 0 #fff, inset 2px 2px 0 #404040, inset -2px -2px 0 #d4d0c8;"></div>
<div class="t" style="left:710px;top:206px;color:#000;">Автообновление таблиц</div>
<div class="a" style="left:692px;top:221px;width:13px;height:13px;background:#fff;box-shadow: inset 1px 1px 0 #808080, inset -1px -1px 0 #fff, inset 2px 2px 0 #404040, inset -2px -2px 0 #d4d0c8;"></div>
<div class="t" style="left:710px;top:221px;color:#000;">Подтверждение при выходе из программы</div>
<div class="a" style="left:692px;top:236px;width:13px;height:13px;background:#fff;box-shadow: inset 1px 1px 0 #808080, inset -1px -1px 0 #fff, inset 2px 2px 0 #404040, inset -2px -2px 0 #d4d0c8;"></div>
<div class="t" style="left:710px;top:236px;color:#000;">Автоматически проверять обновления при старте</div>
<div class="a" style="left:692px;top:251px;width:13px;height:13px;background:#fff;box-shadow: inset 1px 1px 0 #808080, inset -1px -1px 0 #fff, inset 2px 2px 0 #404040, inset -2px -2px 0 #d4d0c8;"></div>
<svg class="a" style="left:695px;top:254px" width="7" height="7"><path d="M6 0h1v1h-1zM5 1h2v1h-2zM0 2h1v1h-1zM4 2h3v1h-3zM0 3h2v1h-2zM3 3h3v1h-3zM0 4h5v1h-5zM1 5h3v1h-3zM2 6h1v1h-1z" fill="#000"/></svg>
<div class="t" style="left:710px;top:251px;color:#000;">Делать резервную копию базы данных</div>
<div class="t" style="left:883px;top:161px;color:#0033cc;text-decoration:underline">для сотрудников</div>
<div class="t" style="left:922px;top:251px;color:#0033cc;text-decoration:underline">при выходе</div>
<div class="t" style="left:874px;top:206px;color:#808080;">каждые</div>
<div class="a" style="left:917px;top:204px;width:24px;height:15px;background:#fbfbfb;"></div>
<div class="t" style="left:923px;top:206px;color:#808080;">60</div>
<div class="t" style="left:944px;top:206px;color:#808080;">секунд</div>
<div class="t" style="left:1009px;top:160px;color:#000;">СУБД:</div>
<div class="a" style="left:1009px;top:175px;width:91px;height:21px;background:#fff;box-shadow: inset 1px 1px 0 #808080, inset -1px -1px 0 #fff, inset 2px 2px 0 #404040, inset -2px -2px 0 #d4d0c8;"></div>
<div class="a" style="left:1082px;top:177px;width:16px;height:17px;background:#d4d0c8;box-shadow: inset -1px -1px 0 #404040, inset 1px 1px 0 #fff, inset -2px -2px 0 #808080;"></div>
<svg class="a" style="left:1086px;top:183px" width="7" height="4" viewBox="0 0 7 4"><path d="M0 0h7L3.5 4z" fill="#000" class="sm"/></svg>
<div class="t" style="left:1014px;top:180px;color:#000;">MS Access</div>
<div class="a" style="left:1105px;top:175px;width:24px;height:21px;background:#d4d0c8;box-shadow: inset -1px -1px 0 #404040, inset 1px 1px 0 #fff, inset -2px -2px 0 #808080;"></div>
<svg class="a" style="left:1111px;top:177px" width="12" height="15" viewBox="0 0 12 15"><path class="sm" d="M3 7V4.5a3 3 0 0 1 6 0V7" fill="none" stroke="#404000" stroke-width="1.6"/><rect x="0.5" y="7.5" width="11" height="7" fill="#e8e040" stroke="#404000"/><path d="M2 10h8M2 12h8" stroke="#807000"/></svg>
<div class="a" style="left:1009px;top:203px;width:13px;height:13px;background:#fff;box-shadow: inset 1px 1px 0 #808080, inset -1px -1px 0 #fff, inset 2px 2px 0 #404040, inset -2px -2px 0 #d4d0c8;"></div>
<svg class="a" style="left:1012px;top:206px" width="7" height="7"><path d="M6 0h1v1h-1zM5 1h2v1h-2zM0 2h1v1h-1zM4 2h3v1h-3zM0 3h2v1h-2zM3 3h3v1h-3zM0 4h5v1h-5zM1 5h3v1h-3zM2 6h1v1h-1z" fill="#000"/></svg>
<div class="t" style="left:1028px;top:204px;color:#000;">Сжимать</div>
<div class="a" style="left:1076px;top:212px;width:2px;height:2px;background:#0040e0;"></div>
<div class="a" style="left:1081px;top:212px;width:2px;height:2px;background:#0040e0;"></div>
<div class="a" style="left:1086px;top:212px;width:2px;height:2px;background:#0040e0;"></div>
<div class="t" style="left:692px;top:270px;color:#000;">Папка для резервных копий базы данных</div>
<div class="t" style="left:947px;top:270px;color:#000;">максимум</div>
<div class="a" style="left:1004px;top:268px;width:25px;height:16px;background:#fff;"></div>
<div class="t" style="left:1010px;top:270px;color:#000;">30</div>
<div class="t" style="left:1032px;top:270px;color:#000;letter-spacing:-0.3px">файлов</div>
<div class="a" style="left:692px;top:285px;width:380px;height:20px;background:#fff;box-shadow: inset 1px 1px 0 #808080, inset -1px -1px 0 #fff, inset 2px 2px 0 #404040, inset -2px -2px 0 #d4d0c8;"></div>
<div class="t" style="left:696px;top:289px;color:#000;">C:\Backups\</div>
<div class="a" style="left:1077px;top:284px;width:24px;height:22px;background:#d4d0c8;box-shadow: inset -1px -1px 0 #404040, inset 1px 1px 0 #fff, inset -2px -2px 0 #808080;"></div>
<svg class="a" style="left:1081px;top:287px" width="17" height="15" viewBox="0 0 17 15"><path d="M0.5 4.5h4l1 1h5v2h-8l-2 6z" fill="#ffff40" stroke="#000"/><path d="M0.5 13.5l3-6h11l-3 6z" fill="#808000" stroke="#000"/><path d="M1.5 5.5v6" stroke="#ffff80"/><path class="sm" d="M8 2c3-2 5-1 6 1.5" stroke="#000" fill="none"/><path d="M12.5 3.5h3v-2.5z" fill="#000"/></svg>
<div class="a" style="left:1105px;top:284px;width:25px;height:22px;background:#d4d0c8;box-shadow: inset -1px -1px 0 #404040, inset 1px 1px 0 #fff, inset -2px -2px 0 #808080;"></div>
<div class="t" style="left:1110px;top:287px;color:#000080;font-weight:bold;font-size:10px;letter-spacing:-0.8px">X<span style="font-size:7px;position:relative;top:-1px">+</span>1</div>
<div class="a" style="left:1110px;top:299px;width:14px;height:1px;background:#000080;"></div>
<div class="t" style="left:692px;top:309px;color:#000;">Папка для документов</div>
<div class="a" style="left:692px;top:323px;width:380px;height:20px;background:#fff;box-shadow: inset 1px 1px 0 #808080, inset -1px -1px 0 #fff, inset 2px 2px 0 #404040, inset -2px -2px 0 #d4d0c8;"></div>
<div class="t" style="left:696px;top:327px;color:#000;">C:\Documents\</div>
<div class="a" style="left:1077px;top:322px;width:24px;height:22px;background:#d4d0c8;box-shadow: inset -1px -1px 0 #404040, inset 1px 1px 0 #fff, inset -2px -2px 0 #808080;"></div>
<svg class="a" style="left:1081px;top:325px" width="17" height="15" viewBox="0 0 17 15"><path d="M0.5 4.5h4l1 1h5v2h-8l-2 6z" fill="#ffff40" stroke="#000"/><path d="M0.5 13.5l3-6h11l-3 6z" fill="#808000" stroke="#000"/><path d="M1.5 5.5v6" stroke="#ffff80"/><path class="sm" d="M8 2c3-2 5-1 6 1.5" stroke="#000" fill="none"/><path d="M12.5 3.5h3v-2.5z" fill="#000"/></svg>
<div class="a" style="left:1105px;top:322px;width:25px;height:22px;background:#d4d0c8;box-shadow: inset -1px -1px 0 #404040, inset 1px 1px 0 #fff, inset -2px -2px 0 #808080;"></div>
<div class="t" style="left:1110px;top:325px;color:#000080;font-weight:bold;font-size:10px;letter-spacing:-0.8px">X<span style="font-size:7px;position:relative;top:-1px">+</span>1</div>
<div class="a" style="left:1110px;top:337px;width:14px;height:1px;background:#000080;"></div>
<div class="t" style="left:692px;top:348px;color:#000;">Папка для шаблонов документов</div>
<div class="t" style="left:950px;top:348px;color:#000;">Активные закладки</div>
<div class="a" style="left:1058px;top:346px;width:13px;height:13px;background:#fff;box-shadow: inset 1px 1px 0 #808080, inset -1px -1px 0 #fff, inset 2px 2px 0 #404040, inset -2px -2px 0 #d4d0c8;"></div>
<svg class="a" style="left:1061px;top:349px" width="7" height="7"><path d="M6 0h1v1h-1zM5 1h2v1h-2zM0 2h1v1h-1zM4 2h3v1h-3zM0 3h2v1h-2zM3 3h3v1h-3zM0 4h5v1h-5zM1 5h3v1h-3zM2 6h1v1h-1z" fill="#000"/></svg>
<div class="a" style="left:692px;top:362px;width:380px;height:20px;background:#fff;box-shadow: inset 1px 1px 0 #808080, inset -1px -1px 0 #fff, inset 2px 2px 0 #404040, inset -2px -2px 0 #d4d0c8;"></div>
<div class="t" style="left:696px;top:366px;color:#000;">C:\Templates\</div>
<div class="a" style="left:1077px;top:361px;width:24px;height:22px;background:#d4d0c8;box-shadow: inset -1px -1px 0 #404040, inset 1px 1px 0 #fff, inset -2px -2px 0 #808080;"></div>
<svg class="a" style="left:1081px;top:364px" width="17" height="15" viewBox="0 0 17 15"><path d="M0.5 4.5h4l1 1h5v2h-8l-2 6z" fill="#ffff40" stroke="#000"/><path d="M0.5 13.5l3-6h11l-3 6z" fill="#808000" stroke="#000"/><path d="M1.5 5.5v6" stroke="#ffff80"/><path class="sm" d="M8 2c3-2 5-1 6 1.5" stroke="#000" fill="none"/><path d="M12.5 3.5h3v-2.5z" fill="#000"/></svg>
<div class="a" style="left:1105px;top:361px;width:25px;height:22px;background:#d4d0c8;box-shadow: inset -1px -1px 0 #404040, inset 1px 1px 0 #fff, inset -2px -2px 0 #808080;"></div>
<div class="t" style="left:1110px;top:364px;color:#000080;font-weight:bold;font-size:10px;letter-spacing:-0.8px">X<span style="font-size:7px;position:relative;top:-1px">+</span>1</div>
<div class="a" style="left:1110px;top:376px;width:14px;height:1px;background:#000080;"></div>
<div class="t" style="left:692px;top:385px;color:#000;">Строка подключения к базе данных</div>
<div class="a" style="left:692px;top:400px;width:438px;height:20px;background:#fff;box-shadow: inset 1px 1px 0 #808080, inset -1px -1px 0 #fff, inset 2px 2px 0 #404040, inset -2px -2px 0 #d4d0c8;"></div>
<div class="t" style="left:696px;top:404px;color:#000;"></div>
<div class="t" style="left:696px;top:405px;color:#000;letter-spacing:-0.26px">Provider=Microsoft.Jet.OLEDB.4.0;Data Source=&lt;%Path%&gt;;Persist Security Info=False</div>
<div class="t" style="left:692px;top:461px;color:#a01010;font-weight:bold;font-size:12px;text-decoration:underline">Пользователь:</div>
<div class="a" style="left:792px;top:459px;width:217px;height:21px;background:#fff;box-shadow: inset 1px 1px 0 #808080, inset -1px -1px 0 #fff, inset 2px 2px 0 #404040, inset -2px -2px 0 #d4d0c8;"></div>
<div class="a" style="left:992px;top:461px;width:16px;height:17px;background:#d4d0c8;box-shadow: inset -1px -1px 0 #404040, inset 1px 1px 0 #fff, inset -2px -2px 0 #808080;"></div>
<svg class="a" style="left:996px;top:467px" width="7" height="4" viewBox="0 0 7 4"><path d="M0 0h7L3.5 4z" fill="#000" class="sm"/></svg>
<div class="t" style="left:797px;top:464px;color:#000;">admin</div>
<div class="a" style="left:1015px;top:457px;width:117px;height:27px;background:#d4d0c8;box-shadow: inset -1px -1px 0 #404040, inset 1px 1px 0 #fff, inset -2px -2px 0 #808080;"></div>
<div class="t" style="left:1029px;top:464px;color:#000;font-weight:bold;-webkit-text-stroke:0.2px #000;font-size:12px;">Права доступа</div>
<div class="a" style="left:692px;top:485px;width:13px;height:13px;background:#fff;box-shadow: inset 1px 1px 0 #808080, inset -1px -1px 0 #fff, inset 2px 2px 0 #404040, inset -2px -2px 0 #d4d0c8;"></div>
<svg class="a" style="left:695px;top:488px" width="7" height="7"><path d="M6 0h1v1h-1zM5 1h2v1h-2zM0 2h1v1h-1zM4 2h3v1h-3zM0 3h2v1h-2zM3 3h3v1h-3zM0 4h5v1h-5zM1 5h3v1h-3zM2 6h1v1h-1z" fill="#000"/></svg>
<div class="t" style="left:710px;top:485px;color:#000;">Показывать список баз данных при старте</div>
<div class="a" style="left:692px;top:500px;width:13px;height:13px;background:#fff;box-shadow: inset 1px 1px 0 #808080, inset -1px -1px 0 #fff, inset 2px 2px 0 #404040, inset -2px -2px 0 #d4d0c8;"></div>
<div class="t" style="left:710px;top:500px;color:#000;">Сохранять текущую запись после сортировки и фильтрации</div>
<div class="a" style="left:692px;top:515px;width:13px;height:13px;background:#fff;box-shadow: inset 1px 1px 0 #808080, inset -1px -1px 0 #fff, inset 2px 2px 0 #404040, inset -2px -2px 0 #d4d0c8;"></div>
<div class="t" style="left:710px;top:515px;color:#000;">Показывать кнопки для фильтров справа от таблицы с фильтрами</div>
<div class="a" style="left:692px;top:530px;width:13px;height:13px;background:#fff;box-shadow: inset 1px 1px 0 #808080, inset -1px -1px 0 #fff, inset 2px 2px 0 #404040, inset -2px -2px 0 #d4d0c8;"></div>
<svg class="a" style="left:695px;top:533px" width="7" height="7"><path d="M6 0h1v1h-1zM5 1h2v1h-2zM0 2h1v1h-1zM4 2h3v1h-3zM0 3h2v1h-2zM3 3h3v1h-3zM0 4h5v1h-5zM1 5h3v1h-3zM2 6h1v1h-1z" fill="#000"/></svg>
<div class="t" style="left:710px;top:530px;color:#000;">Автоматически применять фильтры при включении/выключении</div>
<div class="a" style="left:692px;top:545px;width:13px;height:13px;background:#fff;box-shadow: inset 1px 1px 0 #808080, inset -1px -1px 0 #fff, inset 2px 2px 0 #404040, inset -2px -2px 0 #d4d0c8;"></div>
<svg class="a" style="left:695px;top:548px" width="7" height="7"><path d="M6 0h1v1h-1zM5 1h2v1h-2zM0 2h1v1h-1zM4 2h3v1h-3zM0 3h2v1h-2zM3 3h3v1h-3zM0 4h5v1h-5zM1 5h3v1h-3zM2 6h1v1h-1z" fill="#000"/></svg>
<div class="t" style="left:710px;top:545px;color:#000;">Делать выборку возможных значений для фильтров</div>
<div class="a" style="left:692px;top:560px;width:13px;height:13px;background:#fff;box-shadow: inset 1px 1px 0 #808080, inset -1px -1px 0 #fff, inset 2px 2px 0 #404040, inset -2px -2px 0 #d4d0c8;"></div>
<div class="t" style="left:710px;top:560px;color:#000;">Строить дерево данных после фильтров</div>
<div class="a" style="left:692px;top:575px;width:13px;height:13px;background:#fff;box-shadow: inset 1px 1px 0 #808080, inset -1px -1px 0 #fff, inset 2px 2px 0 #404040, inset -2px -2px 0 #d4d0c8;"></div>
<div class="t" style="left:710px;top:575px;color:#000;">Масштабировать картинки</div>
<div class="t" style="left:692px;top:599px;color:#000;">Показывать вкладки:</div>
<div class="a" style="left:1048px;top:595px;width:16px;height:16px;background:#d4d0c8;box-shadow: inset -1px -1px 0 #404040, inset 1px 1px 0 #fff, inset -2px -2px 0 #808080;"></div>
<div class="a" style="left:1064px;top:595px;width:16px;height:16px;background:#d4d0c8;box-shadow: inset -1px -1px 0 #404040, inset 1px 1px 0 #fff, inset -2px -2px 0 #808080;"></div>
<div class="a" style="left:1080px;top:595px;width:16px;height:16px;background:#d4d0c8;box-shadow: inset -1px -1px 0 #404040, inset 1px 1px 0 #fff, inset -2px -2px 0 #808080;"></div>
<div class="a" style="left:1096px;top:595px;width:16px;height:16px;background:#d4d0c8;box-shadow: inset -1px -1px 0 #404040, inset 1px 1px 0 #fff, inset -2px -2px 0 #808080;"></div>
<div class="a" style="left:1112px;top:595px;width:16px;height:16px;background:#d4d0c8;box-shadow: inset -1px -1px 0 #404040, inset 1px 1px 0 #fff, inset -2px -2px 0 #808080;"></div>
<svg class="a" style="left:1052px;top:599px" width="9" height="9" viewBox="0 0 9 9"><path d="M3.5 0.5h2v3h3v2h-3v3h-2v-3h-3v-2h3z" fill="#90f090" stroke="#008000"/></svg>
<svg class="a" style="left:1067px;top:598px" width="9" height="10" viewBox="0 0 9 10"><path class="sm" d="M1 9L8 1M1.5 1.5L8 8.5" stroke="#900000" stroke-width="1.5"/></svg>
<svg class="a" style="left:1083px;top:598px" width="9" height="9" viewBox="0 0 9 9"><path class="sm" d="M4.5 0L9 5H6v4H3V5H0z" fill="#000"/></svg>
<svg class="a" style="left:1099px;top:598px" width="9" height="9" viewBox="0 0 9 9"><path class="sm" d="M4.5 9L9 4H6V0H3v4H0z" fill="#909090"/></svg>
<svg class="a" style="left:1115px;top:598px" width="9" height="10" viewBox="0 0 9 10"><rect x="0.5" y="0.5" width="6" height="6" fill="#fff" stroke="#000"/><rect x="2.5" y="2.5" width="6" height="7" fill="#fff" stroke="#000"/><path d="M4 5.5h3M4 7.5h3" stroke="#0000a0"/></svg>
<div class="a" style="left:692px;top:614px;width:438px;height:138px;background:#fff;box-shadow: inset 1px 1px 0 #808080, inset -1px -1px 0 #fff, inset 2px 2px 0 #404040, inset -2px -2px 0 #d4d0c8;"></div>
<div class="a" style="left:696px;top:618px;width:11px;height:11px;background:#fff;box-sizing:border-box;border:1px solid #808080;"></div>
<svg class="a" style="left:698px;top:620px" width="7" height="7"><path d="M6 0h1v1h-1zM5 1h2v1h-2zM0 2h1v1h-1zM4 2h3v1h-3zM0 3h2v1h-2zM3 3h3v1h-3zM0 4h5v1h-5zM1 5h3v1h-3zM2 6h1v1h-1z" fill="#000"/></svg>
<div class="t" style="left:710px;top:617px;color:#000;">Клиенты</div>
<div class="a" style="left:696px;top:633px;width:11px;height:11px;background:#fff;box-sizing:border-box;border:1px solid #808080;"></div>
<svg class="a" style="left:698px;top:635px" width="7" height="7"><path d="M6 0h1v1h-1zM5 1h2v1h-2zM0 2h1v1h-1zM4 2h3v1h-3zM0 3h2v1h-2zM3 3h3v1h-3zM0 4h5v1h-5zM1 5h3v1h-3zM2 6h1v1h-1z" fill="#000"/></svg>
<div class="t" style="left:710px;top:632px;color:#000;">Контакты</div>
<div class="a" style="left:696px;top:648px;width:11px;height:11px;background:#fff;box-sizing:border-box;border:1px solid #808080;"></div>
<svg class="a" style="left:698px;top:650px" width="7" height="7"><path d="M6 0h1v1h-1zM5 1h2v1h-2zM0 2h1v1h-1zM4 2h3v1h-3zM0 3h2v1h-2zM3 3h3v1h-3zM0 4h5v1h-5zM1 5h3v1h-3zM2 6h1v1h-1z" fill="#000"/></svg>
<div class="t" style="left:710px;top:647px;color:#000;">Мероприятия</div>
<div class="a" style="left:696px;top:663px;width:11px;height:11px;background:#fff;box-sizing:border-box;border:1px solid #808080;"></div>
<svg class="a" style="left:698px;top:665px" width="7" height="7"><path d="M6 0h1v1h-1zM5 1h2v1h-2zM0 2h1v1h-1zM4 2h3v1h-3zM0 3h2v1h-2zM3 3h3v1h-3zM0 4h5v1h-5zM1 5h3v1h-3zM2 6h1v1h-1z" fill="#000"/></svg>
<div class="t" style="left:710px;top:662px;color:#000;">Сделки</div>
<div class="a" style="left:696px;top:678px;width:11px;height:11px;background:#fff;box-sizing:border-box;border:1px solid #808080;"></div>
<svg class="a" style="left:698px;top:680px" width="7" height="7"><path d="M6 0h1v1h-1zM5 1h2v1h-2zM0 2h1v1h-1zM4 2h3v1h-3zM0 3h2v1h-2zM3 3h3v1h-3zM0 4h5v1h-5zM1 5h3v1h-3zM2 6h1v1h-1z" fill="#000"/></svg>
<div class="t" style="left:710px;top:677px;color:#000;">Договоры</div>
<div class="a" style="left:696px;top:693px;width:11px;height:11px;background:#fff;box-sizing:border-box;border:1px solid #808080;"></div>
<svg class="a" style="left:698px;top:695px" width="7" height="7"><path d="M6 0h1v1h-1zM5 1h2v1h-2zM0 2h1v1h-1zM4 2h3v1h-3zM0 3h2v1h-2zM3 3h3v1h-3zM0 4h5v1h-5zM1 5h3v1h-3zM2 6h1v1h-1z" fill="#000"/></svg>
<div class="t" style="left:710px;top:692px;color:#000;">Счета</div>
<div class="a" style="left:696px;top:708px;width:11px;height:11px;background:#fff;box-sizing:border-box;border:1px solid #808080;"></div>
<svg class="a" style="left:698px;top:710px" width="7" height="7"><path d="M6 0h1v1h-1zM5 1h2v1h-2zM0 2h1v1h-1zM4 2h3v1h-3zM0 3h2v1h-2zM3 3h3v1h-3zM0 4h5v1h-5zM1 5h3v1h-3zM2 6h1v1h-1z" fill="#000"/></svg>
<div class="t" style="left:710px;top:707px;color:#000;">Платежи</div>
<div class="a" style="left:696px;top:723px;width:11px;height:11px;background:#fff;box-sizing:border-box;border:1px solid #808080;"></div>
<svg class="a" style="left:698px;top:725px" width="7" height="7"><path d="M6 0h1v1h-1zM5 1h2v1h-2zM0 2h1v1h-1zM4 2h3v1h-3zM0 3h2v1h-2zM3 3h3v1h-3zM0 4h5v1h-5zM1 5h3v1h-3zM2 6h1v1h-1z" fill="#000"/></svg>
<div class="t" style="left:710px;top:722px;color:#000;">Заказы</div>
<div class="a" style="left:696px;top:738px;width:11px;height:11px;background:#fff;box-sizing:border-box;border:1px solid #808080;"></div>
<svg class="a" style="left:698px;top:740px" width="7" height="7"><path d="M6 0h1v1h-1zM5 1h2v1h-2zM0 2h1v1h-1zM4 2h3v1h-3zM0 3h2v1h-2zM3 3h3v1h-3zM0 4h5v1h-5zM1 5h3v1h-3zM2 6h1v1h-1z" fill="#000"/></svg>
<div class="t" style="left:710px;top:737px;color:#000;">Продавцы</div>
<div class="a" style="left:1112px;top:616px;width:16px;height:134px;background:repeating-conic-gradient(#fff 0 25%, #d4d0c8 0 50%) 0 0/2px 2px;"></div>
<div class="a" style="left:1112px;top:616px;width:16px;height:16px;background:#d4d0c8;box-shadow: inset -1px -1px 0 #404040, inset 1px 1px 0 #fff, inset -2px -2px 0 #808080;"></div>
<svg class="a" style="left:1116px;top:621px" width="7" height="4" viewBox="0 0 7 4"><path d="M0 4h7L3.5 0z" fill="#000" class="sm"/></svg>
<div class="a" style="left:1112px;top:632px;width:16px;height:93px;background:#d4d0c8;box-shadow: inset -1px -1px 0 #404040, inset 1px 1px 0 #fff, inset -2px -2px 0 #808080;"></div>
<div class="a" style="left:1112px;top:734px;width:16px;height:16px;background:#d4d0c8;box-shadow: inset -1px -1px 0 #404040, inset 1px 1px 0 #fff, inset -2px -2px 0 #808080;"></div>
<svg class="a" style="left:1116px;top:740px" width="7" height="4" viewBox="0 0 7 4"><path d="M0 0h7L3.5 4z" fill="#000" class="sm"/></svg>
<div class="a" style="left:903px;top:783px;width:77px;height:25px;background:#000;"></div>
<div class="a" style="left:904px;top:784px;width:75px;height:23px;background:#d4d0c8;box-shadow: inset -1px -1px 0 #404040, inset 1px 1px 0 #fff, inset -2px -2px 0 #808080;"></div>
<div class="t" style="left:931px;top:789px;color:#000;">OK</div>
<div class="a" style="left:984px;top:783px;width:76px;height:24px;background:#d4d0c8;box-shadow: inset -1px -1px 0 #404040, inset 1px 1px 0 #fff, inset -2px -2px 0 #808080;"></div>
<div class="t" style="left:1001px;top:789px;color:#000;">Отмена</div>
<div class="a" style="left:1065px;top:783px;width:75px;height:24px;background:#d4d0c8;box-shadow: inset -1px -1px 0 #404040, inset 1px 1px 0 #fff, inset -2px -2px 0 #808080;"></div>
<div class="t" style="left:1074px;top:789px;color:#000;">Применить</div>
<svg class="a" style="left:1138px;top:806px" width="11" height="11" viewBox="0 0 11 11"><path d="M10 1L1 10M10 5L5 10" stroke="#fff"/><path d="M10 2L2 10M10 6L6 10" stroke="#808080"/></svg>
<div class="a" style="left:189px;top:376px;width:1342px;height:17px;background:#ffffe1;box-sizing:border-box;border:1px solid #000"></div>
<div class="t" style="left:190px;top:379px;color:#000;letter-spacing:-0.015px">Папка в файловой системе, где будут храниться все шаблоны документов, папка с общим доступом для всех пользователей, например '\\Server1\Templates'  Можно испольльзовать глобальные константы, например 'C:\Documents\' &amp; &lt;CurrentUser&gt; &amp; '\Templates'</div>
<svg class="a sm" style="left:0;top:0" width="1545" height="980"><path d="M613 393.8L708 393.5M708 394.2L995 395.3" stroke="#ec1c24" stroke-width="4.6" stroke-linecap="round" fill="none"/><path d="M1293 394.5L1357 394.5M1357 395.2L1480 395.5M1480 396L1538 396.2" stroke="#22b14c" stroke-width="4.6" stroke-linecap="round" fill="none"/></svg>
<div class="t" style="left:574px;top:398px;color:#e8202a;font-weight:bold;-webkit-text-stroke:0.2px #e8202a;font-size:13.5px;">вариант 1</div>
<div class="t" style="left:1297px;top:404px;color:#22aa44;font-weight:bold;-webkit-text-stroke:0.2px #22aa44;font-size:13px;">или 2</div>
<svg width="0" height="0" style="position:absolute"><defs><linearGradient id="gdoc" x1="0" y1="0" x2="1" y2="1"><stop offset="0" stop-color="#b8dcfa"/><stop offset="1" stop-color="#fff"/></linearGradient><linearGradient id="gfun" x1="0" y1="0" x2="1" y2="0"><stop offset="0" stop-color="#30a0f0"/><stop offset="0.5" stop-color="#e0f4ff"/><stop offset="1" stop-color="#30a0f0"/></linearGradient><linearGradient id="gnav" x1="0" y1="0" x2="0" y2="1"><stop offset="0" stop-color="#d0ecff"/><stop offset="0.5" stop-color="#80c8f8"/><stop offset="1" stop-color="#2890e8"/></linearGradient><radialGradient id="gred" cx="0.4" cy="0.35" r="0.7"><stop offset="0" stop-color="#ff9090"/><stop offset="1" stop-color="#d00000"/></radialGradient><linearGradient id="gpen" x1="0" y1="0" x2="1" y2="1"><stop offset="0" stop-color="#ffe080"/><stop offset="1" stop-color="#e08000"/></linearGradient></defs></svg>
<svg class="a sm" style="left:21px;top:89px" width="16" height="16" viewBox="0 0 16 16"><path d="M3.5 0.5h9l3 3v12h-12z" fill="url(#gdoc)" stroke="#1a70e0"/><path d="M12.5 0.5v3h3" fill="#fff" stroke="#1a70e0"/><path d="M6 6.5H13" stroke="#607080"/><path d="M6 8.5H13" stroke="#607080"/><path d="M6 10.5H13" stroke="#607080"/><path d="M6 12.5H13" stroke="#607080"/><circle cx="4.5" cy="11.5" r="3.6" fill="#10a010" stroke="#076007" stroke-width="1"/><path d="M2 11h5v1h-5zM4 9h1v5h-1z" fill="#fff" stroke="#fff" stroke-width="1" style="shape-rendering:crispEdges"/></svg>
<svg class="a sm" style="left:102px;top:89px" width="16" height="16" viewBox="0 0 16 16"><path d="M3.5 0.5h9l3 3v12h-12z" fill="url(#gdoc)" stroke="#1a70e0"/><path d="M12.5 0.5v3h3" fill="#fff" stroke="#1a70e0"/><path d="M6 6.5H13" stroke="#607080"/><path d="M6 8.5H13" stroke="#607080"/><path d="M6 10.5H13" stroke="#607080"/><path d="M6 12.5H13" stroke="#607080"/><circle cx="4.5" cy="11.5" r="3.6" fill="#10a010" stroke="#076007" stroke-width="1"/><path d="M2 11h5v1h-5zM4 9h1v5h-1z" fill="#fff" stroke="#fff" stroke-width="1" style="shape-rendering:crispEdges"/></svg>
<svg class="a sm" style="left:125px;top:89px" width="16" height="16" viewBox="0 0 16 16"><path d="M2.5 10.5L11 2l4 4-8.5 8.5z" fill="url(#gpen)" stroke="#b86000" stroke-width="0.9"/><path d="M4 11.5l8-8" stroke="#fff0a0" stroke-width="1"/><path d="M11 2l1.5-1.5 4 4L15 6z" fill="#e02020" stroke="#a00000" stroke-width="0.6"/><path d="M2.5 10.5l4 4-5.5 1.5z" fill="#f8dcc8" stroke="#a06040" stroke-width="0.7"/><path d="M0.5 15.5l1.5-0.5-1-1z" fill="#303030"/></svg>
<svg class="a sm" style="left:148px;top:89px" width="16" height="16" viewBox="0 0 16 16"><path d="M0.5 0.5h6l3 3v8h-9z" fill="url(#gdoc)" stroke="#1a70e0"/><path d="M6.5 0.5v3h3" fill="#fff" stroke="#1a70e0"/><path d="M2 5.5H7" stroke="#607080"/><path d="M2 7.5H7" stroke="#607080"/><path d="M2 9.5H7" stroke="#607080"/><g transform="translate(5 4)"><path d="M1.5 0.5h6l3 3v8h-9z" fill="url(#gdoc)" stroke="#1a70e0"/><path d="M7.5 0.5v3h3" fill="#fff" stroke="#1a70e0"/><path d="M3 5.5H8" stroke="#607080"/><path d="M3 7.5H8" stroke="#607080"/><path d="M3 9.5H8" stroke="#607080"/></g></svg>
<svg class="a sm" style="left:171px;top:89px" width="16" height="16" viewBox="0 0 16 16"><path d="M3 3L13 13M13 3L3 13" stroke="#a00000" stroke-width="5.5" stroke-linecap="round"/><path d="M3 3L13 13M13 3L3 13" stroke="url(#gred)" stroke-width="3.6" stroke-linecap="round"/></svg>
<svg class="a sm" style="left:194px;top:89px" width="16" height="16" viewBox="0 0 16 16"><rect x="0.5" y="0.5" width="15" height="11" fill="#f0f8ff" stroke="#1a70e0"/><path d="M0 2.5h16" stroke="#1a70e0"/><path d="M1 5.5h14M1 8.5h14M5.5 3v8M10.5 3v8" stroke="#7090a8"/><path d="M9.8 9.8L14.2 14.2M14.2 9.8L9.8 14.2" stroke="#a00000" stroke-width="4" stroke-linecap="round"/><path d="M9.8 9.8L14.2 14.2M14.2 9.8L9.8 14.2" stroke="#f03030" stroke-width="2.4" stroke-linecap="round"/></svg>
<svg class="a sm" style="left:225px;top:89px" width="16" height="16" viewBox="0 0 16 16"><path transform="translate(0 0) scale(1)" d="M0.5 0.5h15v2L9.5 8.5v7l-3-3v-4L0.5 2.5z" fill="url(#gfun)" stroke="#0a80e0"/><circle cx="4.5" cy="11.5" r="3.6" fill="#10a010" stroke="#076007" stroke-width="1"/><path d="M2 11h5v1h-5zM4 9h1v5h-1z" fill="#fff" stroke="#fff" stroke-width="1" style="shape-rendering:crispEdges"/></svg>
<svg class="a sm" style="left:248px;top:89px" width="16" height="16" viewBox="0 0 16 16"><path transform="translate(0 0) scale(1)" d="M0.5 0.5h15v2L9.5 8.5v7l-3-3v-4L0.5 2.5z" fill="url(#gfun)" stroke="#0a80e0"/><path d="M9.8 9.8L14.2 14.2M14.2 9.8L9.8 14.2" stroke="#a00000" stroke-width="4" stroke-linecap="round"/><path d="M9.8 9.8L14.2 14.2M14.2 9.8L9.8 14.2" stroke="#f03030" stroke-width="2.4" stroke-linecap="round"/></svg>
<svg class="a sm" style="left:271px;top:89px" width="16" height="16" viewBox="0 0 16 16"><path transform="translate(3 0) scale(0.8)" d="M0.5 0.5h15v2L9.5 8.5v7l-3-3v-4L0.5 2.5z" fill="url(#gfun)" stroke="#0a80e0"/><path transform="translate(0 3) scale(0.8)" d="M0.5 0.5h15v2L9.5 8.5v7l-3-3v-4L0.5 2.5z" fill="url(#gfun)" stroke="#0a80e0"/><path d="M9.8 9.8L14.2 14.2M14.2 9.8L9.8 14.2" stroke="#a00000" stroke-width="4" stroke-linecap="round"/><path d="M9.8 9.8L14.2 14.2M14.2 9.8L9.8 14.2" stroke="#f03030" stroke-width="2.4" stroke-linecap="round"/></svg>
<svg class="a sm" style="left:294px;top:89px" width="16" height="16" viewBox="0 0 16 16"><path transform="translate(0 0) scale(1)" d="M0.5 0.5h15v2L9.5 8.5v7l-3-3v-4L0.5 2.5z" fill="url(#gfun)" stroke="#0a80e0"/><path d="M7.5 9.5h3l1 1h4v5h-8z" fill="#ffd860" stroke="#e09000"/></svg>
<svg class="a sm" style="left:317px;top:89px" width="16" height="16" viewBox="0 0 16 16"><path transform="translate(0 0) scale(1)" d="M0.5 0.5h15v2L9.5 8.5v7l-3-3v-4L0.5 2.5z" fill="url(#gfun)" stroke="#0a80e0"/><rect x="8.5" y="8.5" width="7" height="7" fill="#303030" stroke="#000"/><rect x="9.5" y="9.5" width="5" height="2" fill="#fff"/><path d="M9 12h6" stroke="#c03000"/></svg>
<svg class="a sm" style="left:349px;top:90px" width="16" height="16" viewBox="0 0 16 16"><path d="M0.5 0.5h15v2L9 8H7L0.5 2.5z" fill="url(#gfun)" stroke="#0a80e0"/><path d="M1 11.5L4 8.5h8l3 3-3 3h-8z" fill="#fff0e0" stroke="#d07020"/><circle cx="8" cy="11.5" r="2.5" fill="#20a020"/><circle cx="8" cy="11.5" r="1" fill="#000"/></svg>
<svg class="a sm" style="left:372px;top:90px" width="16" height="16" viewBox="0 0 16 16"><path d="M1.5 1.5h3l1 1h3v3h-7z" fill="#ffd860" stroke="#e09000"/><path d="M4 6v5M4 8.5h5" stroke="#606060"/><path d="M9.5 5.5h2l1 1h3v3h-6z" fill="#ffd860" stroke="#e09000"/><path d="M9.5 11.5h2l1 1h3v3h-6z" fill="#ffd860" stroke="#e09000"/><path d="M-2 12L1 9h8l3 3-3 3h-8z" fill="#fff0e0" stroke="#d07020"/><circle cx="5" cy="12" r="2.5" fill="#20a020"/><circle cx="5" cy="12" r="1" fill="#000"/></svg>
<div class="t" style="left:393px;top:86px;color:#107010;font-weight:bold;font-size:9px;line-height:10px;letter-spacing:-0.3px">SQL</div>
<svg class="a sm" style="left:393px;top:95px" width="17" height="10" viewBox="0 0 17 10"><path d="M1 5L4 2h9l3 3-3 3H4z" fill="#fff0e0" stroke="#d07020"/><circle cx="8.5" cy="5" r="2.5" fill="#20a020"/><circle cx="8.5" cy="5" r="1" fill="#000"/></svg>
<svg class="a sm" style="left:424px;top:89px" width="16" height="16" viewBox="0 0 16 16"><path d="M3 8.5C3 4 7 3 12 4.5" fill="none" stroke="#108010" stroke-width="4"/><path d="M3 8.5C3 4 7 3 12 4.5" fill="none" stroke="#40d040" stroke-width="2.2"/><path d="M0.5 1.5L6.5 1L3.5 7z" fill="#40d040" stroke="#108010" stroke-width="0.8"/><path d="M13 7.5C13 12 9 13 4 11.5" fill="none" stroke="#108010" stroke-width="4"/><path d="M13 7.5C13 12 9 13 4 11.5" fill="none" stroke="#40d040" stroke-width="2.2"/><path d="M15.5 14.5L9.5 15L12.5 9z" fill="#40d040" stroke="#108010" stroke-width="0.8"/></svg>
<svg class="a sm" style="left:448px;top:89px" width="16" height="16" viewBox="0 0 16 16"><rect x="1" y="4" width="6" height="11" rx="1" fill="#404040"/><rect x="9" y="4" width="6" height="11" rx="1" fill="#404040"/><rect x="2" y="1" width="4" height="4" fill="#606060"/><rect x="10" y="1" width="4" height="4" fill="#606060"/><rect x="6" y="6" width="4" height="4" fill="#303030"/><path d="M2.5 6v7M10.5 6v7" stroke="#909090"/></svg>
<svg class="a sm" style="left:471px;top:89px" width="16" height="16" viewBox="0 0 16 16"><rect x="4.5" y="0.5" width="7" height="5" fill="#fff" stroke="#1a70e0"/><rect x="0.5" y="5.5" width="15" height="6" rx="1.5" fill="#c8c8c8" stroke="#606060"/><path d="M2 8h12" stroke="#404040" stroke-width="1.5"/><rect x="4.5" y="10.5" width="7" height="5" fill="#fff" stroke="#1a70e0"/></svg>
<svg class="a sm" style="left:494px;top:89px" width="16" height="16" viewBox="0 0 16 16"><path d="M0.5 0.5h9l3 3v12h-12z" fill="url(#gdoc)" stroke="#1a70e0"/><path d="M9.5 0.5v3h3" fill="#fff" stroke="#1a70e0"/><circle cx="8" cy="9" r="3.5" fill="#e8f0f8" stroke="#606060" stroke-width="1.2"/><path d="M10.5 11.5L15 15.5" stroke="#202020" stroke-width="1.8"/></svg>
<svg class="a sm" style="left:517px;top:89px" width="16" height="16" viewBox="0 0 16 16"><g transform="translate(4 0)"><path d="M0.5 0.5h8l3 3v12h-11z" fill="url(#gdoc)" stroke="#1a70e0"/><path d="M8.5 0.5v3h3" fill="#fff" stroke="#1a70e0"/><path d="M4 7.5H10" stroke="#607080"/><path d="M4 9.5H10" stroke="#607080"/><path d="M4 11.5H10" stroke="#607080"/><path d="M4 13.5H10" stroke="#607080"/></g><rect x="0.5" y="3.5" width="9" height="8" fill="#fff" stroke="#1a60d0"/><text x="0.8" y="10.5" font-family="Liberation Sans" font-weight="bold" font-style="italic" font-size="9" fill="#1a60d0">W</text></svg>
<svg class="a sm" style="left:540px;top:89px" width="16" height="16" viewBox="0 0 16 16"><g transform="translate(4 0)"><path d="M0.5 0.5h8l3 3v12h-11z" fill="url(#gdoc)" stroke="#1a70e0"/><path d="M8.5 0.5v3h3" fill="#fff" stroke="#1a70e0"/><path d="M4 7.5H10" stroke="#607080"/><path d="M4 9.5H10" stroke="#607080"/><path d="M4 11.5H10" stroke="#607080"/><path d="M4 13.5H10" stroke="#607080"/></g><rect x="0.5" y="3.5" width="9" height="8" fill="#fff" stroke="#108010"/><text x="1.5" y="10.5" font-family="Liberation Sans" font-weight="bold" font-size="9" fill="#108010">X</text></svg>
<svg class="a sm" style="left:563px;top:89px" width="16" height="16" viewBox="0 0 16 16"><g transform="translate(3 0)"><path d="M0.5 0.5h9l3 3v12h-12z" fill="url(#gdoc)" stroke="#1a70e0"/><path d="M9.5 0.5v3h3" fill="#fff" stroke="#1a70e0"/><path d="M3 5.5H10" stroke="#607080"/><path d="M3 7.5H10" stroke="#607080"/><path d="M3 9.5H10" stroke="#607080"/></g><text x="9" y="15" font-family="Liberation Sans" font-style="italic" font-size="8" fill="#c02020">A</text><path d="M1.5 14.5L6 10" stroke="#b05000" stroke-width="3.4"/><path d="M2.5 8.5h6v6z" fill="#f8b020" stroke="#b05000" stroke-width="0.8"/><path d="M1.5 14.5L6 10" stroke="#ffd040" stroke-width="1.6"/></svg>
<svg class="a sm" style="left:586px;top:89px" width="16" height="16" viewBox="0 0 16 16"><rect x="4.5" y="0.5" width="11" height="11" fill="#fff" stroke="#1a70e0"/><text x="5" y="10" font-family="Liberation Sans" font-weight="bold" font-style="italic" font-size="10" fill="#1a60d0">W</text><path d="M1.5 14.5L6 10" stroke="#b05000" stroke-width="3.4"/><path d="M2.5 8.5h6v6z" fill="#f8b020" stroke="#b05000" stroke-width="0.8"/><path d="M1.5 14.5L6 10" stroke="#ffd040" stroke-width="1.6"/></svg>
<svg class="a sm" style="left:609px;top:89px" width="16" height="16" viewBox="0 0 16 16"><rect x="4.5" y="0.5" width="11" height="11" fill="#fff" stroke="#108010"/><text x="6" y="10" font-family="Liberation Sans" font-weight="bold" font-size="10" fill="#108010">X</text><path d="M1.5 14.5L6 10" stroke="#b05000" stroke-width="3.4"/><path d="M2.5 8.5h6v6z" fill="#f8b020" stroke="#b05000" stroke-width="0.8"/><path d="M1.5 14.5L6 10" stroke="#ffd040" stroke-width="1.6"/></svg>
<svg class="a sm" style="left:632px;top:89px" width="16" height="16" viewBox="0 0 16 16"><g transform="translate(3 0)"><path d="M0.5 0.5h9l3 3v12h-12z" fill="url(#gdoc)" stroke="#1a70e0"/><path d="M9.5 0.5v3h3" fill="#fff" stroke="#1a70e0"/></g><text x="5" y="13" font-family="Liberation Sans" font-size="12" font-weight="bold" fill="#1a58b8">e</text><path d="M4 9c2-3 8-3 10 0" stroke="#3080e0" fill="none"/><path d="M1.5 14.5L6 10" stroke="#b05000" stroke-width="3.4"/><path d="M2.5 8.5h6v6z" fill="#f8b020" stroke="#b05000" stroke-width="0.8"/><path d="M1.5 14.5L6 10" stroke="#ffd040" stroke-width="1.6"/></svg>
<svg class="a sm" style="left:655px;top:89px" width="16" height="16" viewBox="0 0 16 16"><g transform="translate(3 0)"><path d="M0.5 0.5h9l3 3v12h-12z" fill="url(#gdoc)" stroke="#1a70e0"/><path d="M9.5 0.5v3h3" fill="#fff" stroke="#1a70e0"/><path d="M3 10.5H10" stroke="#607080"/><path d="M3 12.5H10" stroke="#607080"/><path d="M3 14.5H10" stroke="#607080"/></g><rect x="1" y="1.5" width="13" height="6.5" fill="#0a780a"/><text x="7.5" y="7.2" text-anchor="middle" font-family="Liberation Sans" font-size="6.5" font-weight="bold" fill="#fff">CSV</text><path d="M1.5 14.5L6 10" stroke="#b05000" stroke-width="3.4"/><path d="M2.5 8.5h6v6z" fill="#f8b020" stroke="#b05000" stroke-width="0.8"/><path d="M1.5 14.5L6 10" stroke="#ffd040" stroke-width="1.6"/></svg>
<svg class="a sm" style="left:678px;top:89px" width="16" height="16" viewBox="0 0 16 16"><g transform="translate(3 0)"><path d="M0.5 0.5h9l3 3v12h-12z" fill="url(#gdoc)" stroke="#1a70e0"/><path d="M9.5 0.5v3h3" fill="#fff" stroke="#1a70e0"/><path d="M3 10.5H10" stroke="#607080"/><path d="M3 12.5H10" stroke="#607080"/><path d="M3 14.5H10" stroke="#607080"/></g><rect x="1" y="1.5" width="13" height="6.5" fill="#0a780a"/><text x="7.5" y="7.2" text-anchor="middle" font-family="Liberation Sans" font-size="6.5" font-weight="bold" fill="#fff">TXT</text><path d="M1.5 14.5L6 10" stroke="#b05000" stroke-width="3.4"/><path d="M2.5 8.5h6v6z" fill="#f8b020" stroke="#b05000" stroke-width="0.8"/><path d="M1.5 14.5L6 10" stroke="#ffd040" stroke-width="1.6"/></svg>
<svg class="a sm" style="left:701px;top:89px" width="16" height="16" viewBox="0 0 16 16"><g transform="translate(3 0)"><path d="M0.5 0.5h9l3 3v12h-12z" fill="url(#gdoc)" stroke="#1a70e0"/><path d="M9.5 0.5v3h3" fill="#fff" stroke="#1a70e0"/><path d="M3 10.5H10" stroke="#607080"/><path d="M3 12.5H10" stroke="#607080"/><path d="M3 14.5H10" stroke="#607080"/></g><rect x="1" y="1.5" width="13" height="6.5" fill="#0a780a"/><text x="7.5" y="7.2" text-anchor="middle" font-family="Liberation Sans" font-size="6.5" font-weight="bold" fill="#fff">XML</text><path d="M1.5 14.5L6 10" stroke="#b05000" stroke-width="3.4"/><path d="M2.5 8.5h6v6z" fill="#f8b020" stroke="#b05000" stroke-width="0.8"/><path d="M1.5 14.5L6 10" stroke="#ffd040" stroke-width="1.6"/></svg>
<svg class="a sm" style="left:724px;top:89px" width="16" height="16" viewBox="0 0 16 16"><path d="M0.5 0v15.5H16" stroke="#404040" fill="none"/><rect x="3" y="1" width="4" height="14" fill="#b01890"/><rect x="4" y="2" width="1.5" height="12" fill="#f0b0e8"/><rect x="8" y="8" width="3" height="7" fill="#f0a030"/><rect x="12" y="4" width="3" height="11" fill="#10a030"/></svg>
<svg class="a sm" style="left:756px;top:89px" width="16" height="16" viewBox="0 0 16 16"><rect x="6.5" y="0.5" width="8" height="15" fill="#fff" stroke="#808080"/><rect x="6" y="0" width="9" height="2" fill="#3080d0"/><path d="M9 4.5h4M9 6.5h4M9 8.5h4M9 10.5h4M9 12.5h4" stroke="#90a0b0"/><circle cx="4.0" cy="11.5" r="3.6" fill="#10a010" stroke="#076007" stroke-width="1"/><path d="M1.5 11h5v1h-5zM3.5 9h1v5h-1z" fill="#fff" stroke="#fff" stroke-width="1" style="shape-rendering:crispEdges"/></svg>
<svg class="a sm" style="left:779px;top:89px" width="16" height="16" viewBox="0 0 16 16"><rect x="0.5" y="0.5" width="7" height="15" fill="#fff" stroke="#808080"/><rect x="0" y="0" width="8" height="2" fill="#3080d0"/><path d="M2 4.5h4M2 6.5h4M2 8.5h4M2 10.5h4" stroke="#90a0b0"/><circle cx="11.5" cy="12" r="3.6" fill="#f09010" stroke="#c06000" stroke-width="0.6" stroke-dasharray="1.2 1"/><circle cx="11.5" cy="12" r="2.8" fill="#f0a020"/><circle cx="11.5" cy="12" r="1.2" fill="#fff"/></svg>
<svg class="a sm" style="left:801px;top:89px" width="16" height="16" viewBox="0 0 16 16"><rect x="0.5" y="0.5" width="15" height="11" fill="#f0f8ff" stroke="#1a70e0"/><path d="M0 2.5h16" stroke="#1a70e0"/><path d="M1 5.5h14M1 8.5h14M5.5 3v8M10.5 3v8" stroke="#7090a8"/><circle cx="12" cy="12" r="3.6" fill="#f09010" stroke="#c06000" stroke-width="0.6" stroke-dasharray="1.2 1"/><circle cx="12" cy="12" r="2.8" fill="#f0a020"/><circle cx="12" cy="12" r="1.2" fill="#fff"/></svg>
<svg class="a sm" style="left:824px;top:89px" width="16" height="16" viewBox="0 0 16 16"><rect x="0.5" y="0.5" width="5" height="11" fill="#fff" stroke="#f08020"/><rect x="5.5" y="0.5" width="5" height="11" fill="#fff" stroke="#20b0b0"/><rect x="10.5" y="0.5" width="5" height="11" fill="#fff" stroke="#a02080"/><path d="M2 4h3M2 6h3M2 8h3M7 4h3M7 6h3M7 8h3" stroke="#909090"/><circle cx="12" cy="12" r="3.6" fill="#f09010" stroke="#c06000" stroke-width="0.6" stroke-dasharray="1.2 1"/><circle cx="12" cy="12" r="2.8" fill="#f0a020"/><circle cx="12" cy="12" r="1.2" fill="#fff"/></svg>
<svg class="a sm" style="left:855px;top:89px" width="16" height="16" viewBox="0 0 16 16"><path d="M1.5 1v14" stroke="#0a68c8" stroke-width="2"/><path d="M14.5 1.5v13L5.5 8z" fill="url(#gnav)" stroke="#0a68c8" stroke-width="1.4" stroke-linejoin="round"/></svg>
<svg class="a sm" style="left:878px;top:89px" width="16" height="16" viewBox="0 0 16 16"><path d="M13.5 1.5v13L3.5 8z" fill="url(#gnav)" stroke="#0a68c8" stroke-width="1.4" stroke-linejoin="round"/></svg>
<svg class="a sm" style="left:901px;top:89px" width="16" height="16" viewBox="0 0 16 16"><path d="M1.5 1.5v13L11.5 8z" fill="url(#gnav)" stroke="#0a68c8" stroke-width="1.4" stroke-linejoin="round"/></svg>
<svg class="a sm" style="left:924px;top:89px" width="16" height="16" viewBox="0 0 16 16"><path d="M1.5 1.5v13L10.5 8z" fill="url(#gnav)" stroke="#0a68c8" stroke-width="1.4" stroke-linejoin="round"/><path d="M14.5 1v14" stroke="#0a68c8" stroke-width="2"/></svg>
</body></html>
